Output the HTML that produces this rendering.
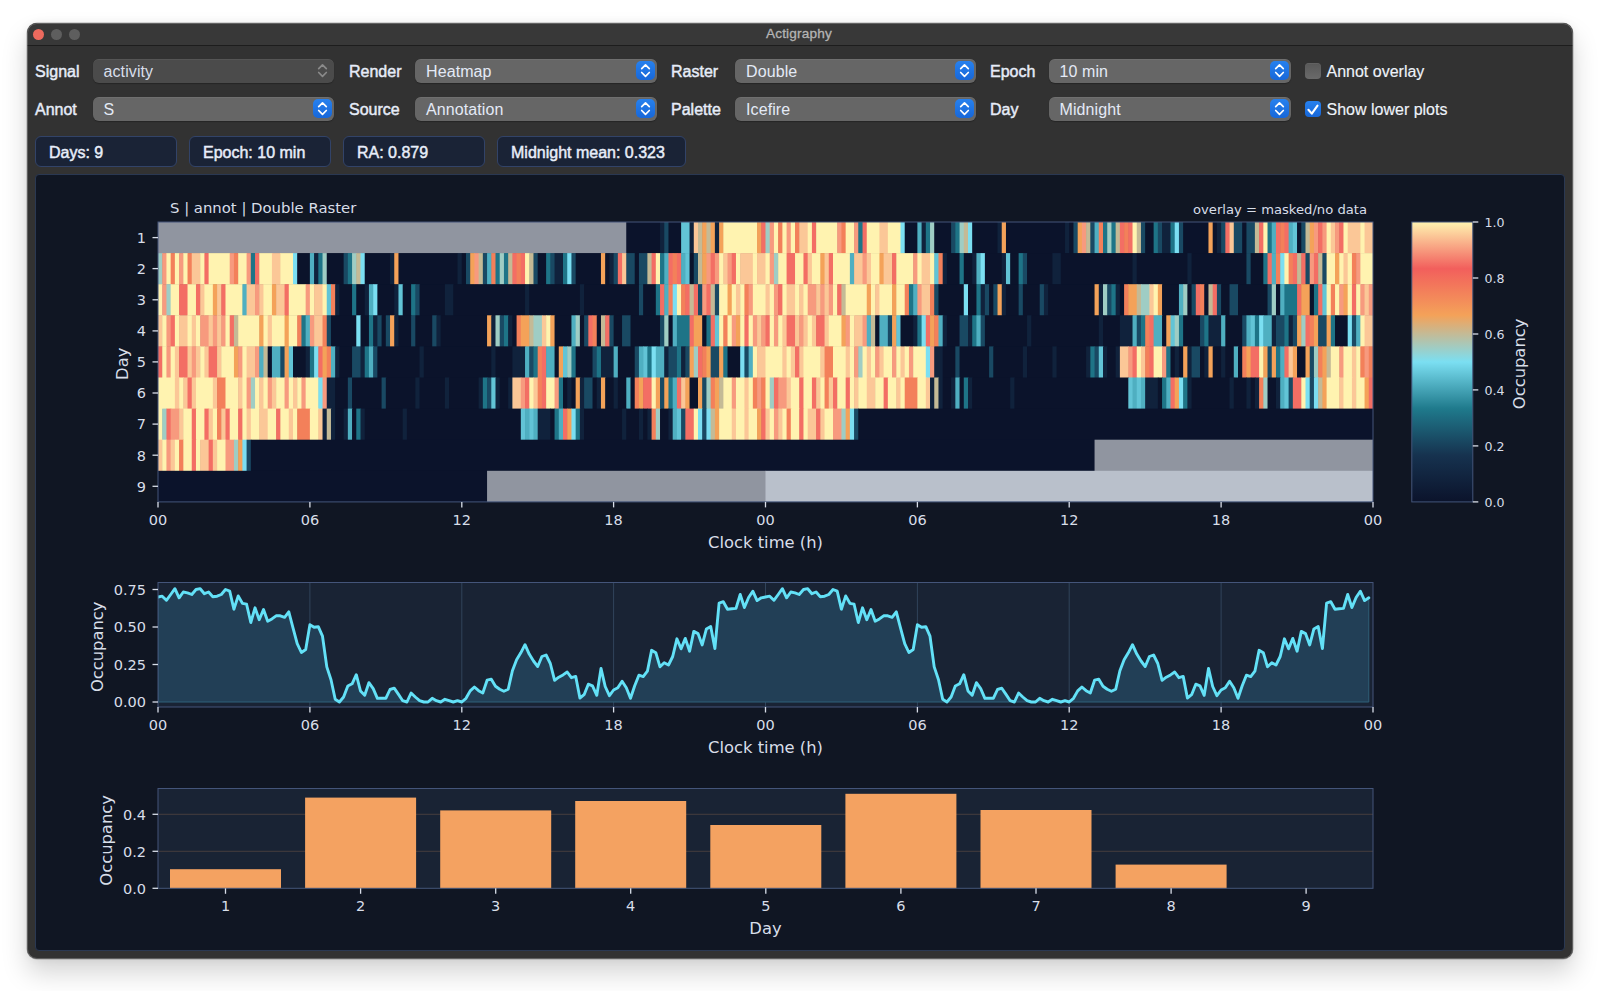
<!DOCTYPE html>
<html><head><meta charset="utf-8"><title>Actigraphy</title>
<style>
html,body{margin:0;padding:0}
body{width:1600px;height:991px;background:#fff;position:relative;overflow:hidden;font-family:"Liberation Sans",sans-serif}
.win{position:absolute;left:27px;top:22.5px;width:1546px;height:936.5px;background:#323232;border-radius:10px;box-shadow:0 0 0 .5px rgba(0,0,0,.28),0 14px 26px rgba(0,0,0,.17),0 0 10px rgba(0,0,0,.06);overflow:hidden}
.win:after{content:"";position:absolute;inset:0;border-radius:10px;border:1px solid rgba(255,255,255,.22);pointer-events:none}
.tb{position:absolute;left:0;top:0;right:0;height:22px;background:#383838;border-bottom:1px solid #1d1d1d}
.tt{position:absolute;left:-2px;right:0;top:3.5px;text-align:center;font-size:13.6px;color:#b4b4b4;letter-spacing:.2px;-webkit-text-stroke:.3px #b4b4b4}
.dot{position:absolute;top:6px;width:11px;height:11px;border-radius:50%;background:#5e5e5e}
.abs{position:absolute;left:0;top:0}
.lb{position:absolute;font-size:16px;-webkit-text-stroke:.45px #e6ecf8;color:#e6ecf8;line-height:25.5px;height:24px;white-space:nowrap}
.cb{position:absolute;height:24px;border-radius:6px;background:#666666;box-shadow:0 .5px 0 rgba(255,255,255,.12) inset,0 1px 1px rgba(0,0,0,.25);color:#e4eaf6;font-size:16px;letter-spacing:.1px;line-height:24px;box-sizing:border-box}
.cb span{position:absolute;left:11px;top:.7px}
.cb .ar{position:absolute;right:2px;top:1.8px;width:19px;height:19px;border-radius:5px;background:linear-gradient(#2781ee,#1767d9)}
.cb.dis{background:#4b4b4b;color:#d8deea}
.cb.dis .ar{background:none}
.pill{position:absolute;top:136px;height:31px;box-sizing:border-box;border:1px solid #324368;border-radius:6px;background:#1a2336;color:#e8eefa;font-size:16px;-webkit-text-stroke:.45px #e8eefa;line-height:31px;padding-left:13px;white-space:nowrap}
.chk{position:absolute;width:16px;height:16px;border-radius:4px;box-sizing:border-box}
.panel{position:absolute;left:35px;top:174px;width:1530px;height:777px;background:#101623;border:1px solid #2a3852;border-radius:4px;box-sizing:border-box}
</style></head><body>
<div class="win"><div class="tb"><div class="dot" style="left:6px;background:#ed6a5e"></div><div class="dot" style="left:23.5px"></div><div class="dot" style="left:41.5px"></div><div class="tt">Actigraphy</div></div></div>
<div class="lb" style="left:35px;top:59px">Signal</div><div class="cb dis" style="left:92.5px;top:59px;width:241.5px"><span>activity</span><svg class="ar" width="19" height="19" viewBox="0 0 19 19"><path d="M5.7 7.7 9.5 3.9 13.3 7.7M5.7 11.5 9.5 15.3 13.3 11.5" fill="none" stroke="#8a8a8a" stroke-width="1.7" stroke-linecap="round" stroke-linejoin="round"/></svg></div><div class="lb" style="left:349px;top:59px">Render</div><div class="cb" style="left:415px;top:59px;width:241.5px"><span>Heatmap</span><svg class="ar" width="19" height="19" viewBox="0 0 19 19"><path d="M5.7 7.7 9.5 3.9 13.3 7.7M5.7 11.5 9.5 15.3 13.3 11.5" fill="none" stroke="#fff" stroke-width="1.7" stroke-linecap="round" stroke-linejoin="round"/></svg></div><div class="lb" style="left:671px;top:59px">Raster</div><div class="cb" style="left:735px;top:59px;width:240.5px"><span>Double</span><svg class="ar" width="19" height="19" viewBox="0 0 19 19"><path d="M5.7 7.7 9.5 3.9 13.3 7.7M5.7 11.5 9.5 15.3 13.3 11.5" fill="none" stroke="#fff" stroke-width="1.7" stroke-linecap="round" stroke-linejoin="round"/></svg></div><div class="lb" style="left:990px;top:59px">Epoch</div><div class="cb" style="left:1048.5px;top:59px;width:242px"><span>10 min</span><svg class="ar" width="19" height="19" viewBox="0 0 19 19"><path d="M5.7 7.7 9.5 3.9 13.3 7.7M5.7 11.5 9.5 15.3 13.3 11.5" fill="none" stroke="#fff" stroke-width="1.7" stroke-linecap="round" stroke-linejoin="round"/></svg></div><div class="lb" style="left:35px;top:97px">Annot</div><div class="cb" style="left:92.5px;top:97px;width:241.5px"><span>S</span><svg class="ar" width="19" height="19" viewBox="0 0 19 19"><path d="M5.7 7.7 9.5 3.9 13.3 7.7M5.7 11.5 9.5 15.3 13.3 11.5" fill="none" stroke="#fff" stroke-width="1.7" stroke-linecap="round" stroke-linejoin="round"/></svg></div><div class="lb" style="left:349px;top:97px">Source</div><div class="cb" style="left:415px;top:97px;width:241.5px"><span>Annotation</span><svg class="ar" width="19" height="19" viewBox="0 0 19 19"><path d="M5.7 7.7 9.5 3.9 13.3 7.7M5.7 11.5 9.5 15.3 13.3 11.5" fill="none" stroke="#fff" stroke-width="1.7" stroke-linecap="round" stroke-linejoin="round"/></svg></div><div class="lb" style="left:671px;top:97px">Palette</div><div class="cb" style="left:735px;top:97px;width:240.5px"><span>Icefire</span><svg class="ar" width="19" height="19" viewBox="0 0 19 19"><path d="M5.7 7.7 9.5 3.9 13.3 7.7M5.7 11.5 9.5 15.3 13.3 11.5" fill="none" stroke="#fff" stroke-width="1.7" stroke-linecap="round" stroke-linejoin="round"/></svg></div><div class="lb" style="left:990px;top:97px">Day</div><div class="cb" style="left:1048.5px;top:97px;width:242px"><span>Midnight</span><svg class="ar" width="19" height="19" viewBox="0 0 19 19"><path d="M5.7 7.7 9.5 3.9 13.3 7.7M5.7 11.5 9.5 15.3 13.3 11.5" fill="none" stroke="#fff" stroke-width="1.7" stroke-linecap="round" stroke-linejoin="round"/></svg></div><div class="chk" style="left:1305px;top:63px;background:linear-gradient(#585858,#6a6a6a);box-shadow:0 .5px 0 rgba(255,255,255,.12) inset"></div><div class="lb" style="left:1326.5px;top:59px;-webkit-text-stroke:.15px #eef2fa;color:#eef2fa;font-size:16px;line-height:26.5px">Annot overlay</div><div class="chk" style="left:1305px;top:101px;background:linear-gradient(#2781ee,#1767d9)"><svg width="16" height="16" viewBox="0 0 16 16" style="position:absolute;left:0;top:0"><path d="M3.4 8.8 6.8 12.6 12.5 4.6" fill="none" stroke="#fff" stroke-width="2.1" stroke-linecap="round" stroke-linejoin="round"/></svg></div><div class="lb" style="left:1326.5px;top:97px;-webkit-text-stroke:.15px #eef2fa;color:#eef2fa;font-size:16px;line-height:26.5px">Show lower plots</div><div class="pill" style="left:35px;width:142px">Days: 9</div><div class="pill" style="left:189px;width:142px">Epoch: 10 min</div><div class="pill" style="left:343px;width:142px">RA: 0.879</div><div class="pill" style="left:497px;width:189px">Midnight mean: 0.323</div><div class="panel"></div>
<svg width="1600" height="991" viewBox="0 0 1600 991" style="position:absolute;left:0;top:0" font-family="'DejaVu Sans','Liberation Sans',sans-serif" fill="#d8dee9">
<rect x="158.00" y="222.00" width="1215.00" height="279.90" fill="#0b132b"/>
<g>
<g transform="translate(0,222.00)"><rect height="31.60" x="158.00" width="468.88" fill="#9095a0"/><rect height="31.60" x="626.28" width="34.35" fill="#0b132b"/><rect height="31.60" x="660.03" width="4.82" fill="#10223c"/><rect height="31.60" x="664.25" width="4.82" fill="#194963"/><rect height="31.60" x="668.47" width="13.26" fill="#0b132b"/><rect height="31.60" x="681.12" width="9.04" fill="#62c4d6"/><rect height="31.60" x="689.56" width="4.82" fill="#10223c"/><rect height="31.60" x="693.78" width="4.82" fill="#fbc797"/><rect height="31.60" x="698.00" width="4.82" fill="#c4ba96"/><rect height="31.60" x="702.22" width="4.82" fill="#f4a259"/><rect height="31.60" x="706.44" width="4.82" fill="#c4ba96"/><rect height="31.60" x="710.66" width="4.82" fill="#f4a259"/><rect height="31.60" x="714.88" width="4.82" fill="#10223c"/><rect height="31.60" x="719.09" width="4.82" fill="#f4a259"/><rect height="31.60" x="723.31" width="34.35" fill="#fff3b0"/><rect height="31.60" x="757.06" width="4.82" fill="#f4a259"/><rect height="31.60" x="761.28" width="4.82" fill="#f36e64"/><rect height="31.60" x="765.50" width="4.82" fill="#9fcdc4"/><rect height="31.60" x="769.72" width="4.82" fill="#f79a7e"/><rect height="31.60" x="773.94" width="4.82" fill="#fff3b0"/><rect height="31.60" x="778.16" width="4.82" fill="#f3805a"/><rect height="31.60" x="782.38" width="4.82" fill="#fff3b0"/><rect height="31.60" x="786.59" width="4.82" fill="#f79a7e"/><rect height="31.60" x="790.81" width="4.82" fill="#fff3b0"/><rect height="31.60" x="795.03" width="4.82" fill="#f3805a"/><rect height="31.60" x="799.25" width="9.04" fill="#fbc797"/><rect height="31.60" x="807.69" width="4.82" fill="#fff3b0"/><rect height="31.60" x="811.91" width="4.82" fill="#f36e64"/><rect height="31.60" x="816.12" width="21.69" fill="#fff3b0"/><rect height="31.60" x="837.22" width="4.82" fill="#f79a7e"/><rect height="31.60" x="841.44" width="4.82" fill="#f3805a"/><rect height="31.60" x="845.66" width="9.04" fill="#fff3b0"/><rect height="31.60" x="854.09" width="4.82" fill="#f79a7e"/><rect height="31.60" x="858.31" width="4.82" fill="#1e7487"/><rect height="31.60" x="862.53" width="4.82" fill="#f36e64"/><rect height="31.60" x="866.75" width="13.26" fill="#fff3b0"/><rect height="31.60" x="879.41" width="9.04" fill="#fbc797"/><rect height="31.60" x="887.84" width="13.26" fill="#fff3b0"/><rect height="31.60" x="900.50" width="4.82" fill="#7bdff2"/><rect height="31.60" x="904.72" width="13.26" fill="#0b132b"/><rect height="31.60" x="917.38" width="4.82" fill="#4fafc1"/><rect height="31.60" x="921.59" width="4.82" fill="#10223c"/><rect height="31.60" x="925.81" width="4.82" fill="#1e7487"/><rect height="31.60" x="930.03" width="4.82" fill="#9fcdc4"/><rect height="31.60" x="934.25" width="17.48" fill="#0b132b"/><rect height="31.60" x="951.12" width="4.82" fill="#194963"/><rect height="31.60" x="955.34" width="4.82" fill="#1e7487"/><rect height="31.60" x="959.56" width="4.82" fill="#9fcdc4"/><rect height="31.60" x="963.78" width="4.82" fill="#c4ba96"/><rect height="31.60" x="968.00" width="4.82" fill="#7bdff2"/><rect height="31.60" x="972.22" width="25.91" fill="#0b132b"/><rect height="31.60" x="997.53" width="4.82" fill="#10223c"/><rect height="31.60" x="1001.75" width="4.82" fill="#f4a259"/><rect height="31.60" x="1005.97" width="59.66" fill="#0b132b"/><rect height="31.60" x="1065.03" width="4.82" fill="#10223c"/><rect height="31.60" x="1069.25" width="4.82" fill="#0b132b"/><rect height="31.60" x="1073.47" width="4.82" fill="#194963"/><rect height="31.60" x="1077.69" width="4.82" fill="#f4a259"/><rect height="31.60" x="1081.91" width="4.82" fill="#f79a7e"/><rect height="31.60" x="1086.12" width="4.82" fill="#c4ba96"/><rect height="31.60" x="1090.34" width="4.82" fill="#194963"/><rect height="31.60" x="1094.56" width="4.82" fill="#4fafc1"/><rect height="31.60" x="1098.78" width="4.82" fill="#f3805a"/><rect height="31.60" x="1103.00" width="4.82" fill="#1e7487"/><rect height="31.60" x="1107.22" width="4.82" fill="#9fcdc4"/><rect height="31.60" x="1111.44" width="4.82" fill="#1e7487"/><rect height="31.60" x="1115.66" width="4.82" fill="#c4ba96"/><rect height="31.60" x="1119.88" width="4.82" fill="#f36e64"/><rect height="31.60" x="1124.09" width="4.82" fill="#f3805a"/><rect height="31.60" x="1128.31" width="4.82" fill="#f36e64"/><rect height="31.60" x="1132.53" width="4.82" fill="#fff3b0"/><rect height="31.60" x="1136.75" width="4.82" fill="#c4ba96"/><rect height="31.60" x="1140.97" width="4.82" fill="#194963"/><rect height="31.60" x="1145.19" width="9.04" fill="#0b132b"/><rect height="31.60" x="1153.62" width="4.82" fill="#1e7487"/><rect height="31.60" x="1157.84" width="4.82" fill="#194963"/><rect height="31.60" x="1162.06" width="9.04" fill="#10223c"/><rect height="31.60" x="1170.50" width="4.82" fill="#1e7487"/><rect height="31.60" x="1174.72" width="4.82" fill="#7bdff2"/><rect height="31.60" x="1178.94" width="4.82" fill="#194963"/><rect height="31.60" x="1183.16" width="25.91" fill="#0b132b"/><rect height="31.60" x="1208.47" width="4.82" fill="#f4a259"/><rect height="31.60" x="1212.69" width="4.82" fill="#0b132b"/><rect height="31.60" x="1216.91" width="4.82" fill="#10223c"/><rect height="31.60" x="1221.12" width="4.82" fill="#194963"/><rect height="31.60" x="1225.34" width="4.82" fill="#f36e64"/><rect height="31.60" x="1229.56" width="4.82" fill="#fbc797"/><rect height="31.60" x="1233.78" width="9.04" fill="#194963"/><rect height="31.60" x="1242.22" width="4.82" fill="#0b132b"/><rect height="31.60" x="1246.44" width="9.04" fill="#194963"/><rect height="31.60" x="1254.88" width="4.82" fill="#c4ba96"/><rect height="31.60" x="1259.09" width="4.82" fill="#f36e64"/><rect height="31.60" x="1263.31" width="4.82" fill="#fff3b0"/><rect height="31.60" x="1267.53" width="4.82" fill="#1e7487"/><rect height="31.60" x="1271.75" width="4.82" fill="#4fafc1"/><rect height="31.60" x="1275.97" width="4.82" fill="#f36e64"/><rect height="31.60" x="1280.19" width="4.82" fill="#f3805a"/><rect height="31.60" x="1284.41" width="4.82" fill="#f36e64"/><rect height="31.60" x="1288.62" width="4.82" fill="#4fafc1"/><rect height="31.60" x="1292.84" width="4.82" fill="#62c4d6"/><rect height="31.60" x="1297.06" width="4.82" fill="#0b132b"/><rect height="31.60" x="1301.28" width="4.82" fill="#194963"/><rect height="31.60" x="1305.50" width="4.82" fill="#c4ba96"/><rect height="31.60" x="1309.72" width="4.82" fill="#f4a259"/><rect height="31.60" x="1313.94" width="4.82" fill="#f79a7e"/><rect height="31.60" x="1318.16" width="4.82" fill="#f36e64"/><rect height="31.60" x="1322.38" width="4.82" fill="#f79a7e"/><rect height="31.60" x="1326.59" width="4.82" fill="#fff3b0"/><rect height="31.60" x="1330.81" width="4.82" fill="#fbc797"/><rect height="31.60" x="1335.03" width="4.82" fill="#f79a7e"/><rect height="31.60" x="1339.25" width="4.82" fill="#f36e64"/><rect height="31.60" x="1343.47" width="4.82" fill="#fff3b0"/><rect height="31.60" x="1347.69" width="13.26" fill="#fbc797"/><rect height="31.60" x="1360.34" width="4.82" fill="#fff3b0"/><rect height="31.60" x="1364.56" width="8.44" fill="#fbc797"/></g>
<g transform="translate(0,253.10)"><rect height="31.60" x="158.00" width="4.82" fill="#9fcdc4"/><rect height="31.60" x="162.22" width="4.82" fill="#f79a7e"/><rect height="31.60" x="166.44" width="4.82" fill="#fff3b0"/><rect height="31.60" x="170.66" width="4.82" fill="#f3805a"/><rect height="31.60" x="174.88" width="4.82" fill="#fff3b0"/><rect height="31.60" x="179.09" width="4.82" fill="#f79a7e"/><rect height="31.60" x="183.31" width="4.82" fill="#fff3b0"/><rect height="31.60" x="187.53" width="4.82" fill="#f3805a"/><rect height="31.60" x="191.75" width="9.04" fill="#fbc797"/><rect height="31.60" x="200.19" width="4.82" fill="#fff3b0"/><rect height="31.60" x="204.41" width="4.82" fill="#f36e64"/><rect height="31.60" x="208.62" width="21.69" fill="#fff3b0"/><rect height="31.60" x="229.72" width="4.82" fill="#f79a7e"/><rect height="31.60" x="233.94" width="4.82" fill="#f3805a"/><rect height="31.60" x="238.16" width="9.04" fill="#fff3b0"/><rect height="31.60" x="246.59" width="4.82" fill="#f79a7e"/><rect height="31.60" x="250.81" width="4.82" fill="#1e7487"/><rect height="31.60" x="255.03" width="4.82" fill="#f36e64"/><rect height="31.60" x="259.25" width="13.26" fill="#fff3b0"/><rect height="31.60" x="271.91" width="9.04" fill="#fbc797"/><rect height="31.60" x="280.34" width="13.26" fill="#fff3b0"/><rect height="31.60" x="293.00" width="4.82" fill="#7bdff2"/><rect height="31.60" x="297.22" width="13.26" fill="#0b132b"/><rect height="31.60" x="309.88" width="4.82" fill="#4fafc1"/><rect height="31.60" x="314.09" width="4.82" fill="#10223c"/><rect height="31.60" x="318.31" width="4.82" fill="#1e7487"/><rect height="31.60" x="322.53" width="4.82" fill="#9fcdc4"/><rect height="31.60" x="326.75" width="17.48" fill="#0b132b"/><rect height="31.60" x="343.62" width="4.82" fill="#194963"/><rect height="31.60" x="347.84" width="4.82" fill="#1e7487"/><rect height="31.60" x="352.06" width="4.82" fill="#9fcdc4"/><rect height="31.60" x="356.28" width="4.82" fill="#c4ba96"/><rect height="31.60" x="360.50" width="4.82" fill="#7bdff2"/><rect height="31.60" x="364.72" width="25.91" fill="#0b132b"/><rect height="31.60" x="390.03" width="4.82" fill="#10223c"/><rect height="31.60" x="394.25" width="4.82" fill="#f4a259"/><rect height="31.60" x="398.47" width="59.66" fill="#0b132b"/><rect height="31.60" x="457.53" width="4.82" fill="#10223c"/><rect height="31.60" x="461.75" width="4.82" fill="#0b132b"/><rect height="31.60" x="465.97" width="4.82" fill="#194963"/><rect height="31.60" x="470.19" width="4.82" fill="#f4a259"/><rect height="31.60" x="474.41" width="4.82" fill="#f79a7e"/><rect height="31.60" x="478.62" width="4.82" fill="#c4ba96"/><rect height="31.60" x="482.84" width="4.82" fill="#194963"/><rect height="31.60" x="487.06" width="4.82" fill="#4fafc1"/><rect height="31.60" x="491.28" width="4.82" fill="#f3805a"/><rect height="31.60" x="495.50" width="4.82" fill="#1e7487"/><rect height="31.60" x="499.72" width="4.82" fill="#9fcdc4"/><rect height="31.60" x="503.94" width="4.82" fill="#1e7487"/><rect height="31.60" x="508.16" width="4.82" fill="#c4ba96"/><rect height="31.60" x="512.38" width="4.82" fill="#f36e64"/><rect height="31.60" x="516.59" width="4.82" fill="#f3805a"/><rect height="31.60" x="520.81" width="4.82" fill="#f36e64"/><rect height="31.60" x="525.03" width="4.82" fill="#fff3b0"/><rect height="31.60" x="529.25" width="4.82" fill="#c4ba96"/><rect height="31.60" x="533.47" width="4.82" fill="#194963"/><rect height="31.60" x="537.69" width="9.04" fill="#0b132b"/><rect height="31.60" x="546.12" width="4.82" fill="#1e7487"/><rect height="31.60" x="550.34" width="4.82" fill="#194963"/><rect height="31.60" x="554.56" width="9.04" fill="#10223c"/><rect height="31.60" x="563.00" width="4.82" fill="#1e7487"/><rect height="31.60" x="567.22" width="4.82" fill="#7bdff2"/><rect height="31.60" x="571.44" width="4.82" fill="#194963"/><rect height="31.60" x="575.66" width="25.91" fill="#0b132b"/><rect height="31.60" x="600.97" width="4.82" fill="#f4a259"/><rect height="31.60" x="605.19" width="4.82" fill="#0b132b"/><rect height="31.60" x="609.41" width="4.82" fill="#10223c"/><rect height="31.60" x="613.62" width="4.82" fill="#194963"/><rect height="31.60" x="617.84" width="4.82" fill="#f36e64"/><rect height="31.60" x="622.06" width="4.82" fill="#fbc797"/><rect height="31.60" x="626.28" width="9.04" fill="#194963"/><rect height="31.60" x="634.72" width="4.82" fill="#0b132b"/><rect height="31.60" x="638.94" width="9.04" fill="#194963"/><rect height="31.60" x="647.38" width="4.82" fill="#c4ba96"/><rect height="31.60" x="651.59" width="4.82" fill="#f36e64"/><rect height="31.60" x="655.81" width="4.82" fill="#fff3b0"/><rect height="31.60" x="660.03" width="4.82" fill="#1e7487"/><rect height="31.60" x="664.25" width="4.82" fill="#4fafc1"/><rect height="31.60" x="668.47" width="4.82" fill="#f36e64"/><rect height="31.60" x="672.69" width="4.82" fill="#f3805a"/><rect height="31.60" x="676.91" width="4.82" fill="#f36e64"/><rect height="31.60" x="681.12" width="4.82" fill="#4fafc1"/><rect height="31.60" x="685.34" width="4.82" fill="#62c4d6"/><rect height="31.60" x="689.56" width="4.82" fill="#0b132b"/><rect height="31.60" x="693.78" width="4.82" fill="#194963"/><rect height="31.60" x="698.00" width="4.82" fill="#c4ba96"/><rect height="31.60" x="702.22" width="4.82" fill="#f4a259"/><rect height="31.60" x="706.44" width="4.82" fill="#f79a7e"/><rect height="31.60" x="710.66" width="4.82" fill="#f36e64"/><rect height="31.60" x="714.88" width="4.82" fill="#f79a7e"/><rect height="31.60" x="719.09" width="4.82" fill="#fff3b0"/><rect height="31.60" x="723.31" width="4.82" fill="#fbc797"/><rect height="31.60" x="727.53" width="4.82" fill="#f79a7e"/><rect height="31.60" x="731.75" width="4.82" fill="#f36e64"/><rect height="31.60" x="735.97" width="4.82" fill="#fff3b0"/><rect height="31.60" x="740.19" width="13.26" fill="#fbc797"/><rect height="31.60" x="752.84" width="4.82" fill="#fff3b0"/><rect height="31.60" x="757.06" width="9.04" fill="#fbc797"/><rect height="31.60" x="765.50" width="4.82" fill="#fff3b0"/><rect height="31.60" x="769.72" width="4.82" fill="#f79a7e"/><rect height="31.60" x="773.94" width="4.82" fill="#9fcdc4"/><rect height="31.60" x="778.16" width="9.04" fill="#fff3b0"/><rect height="31.60" x="786.59" width="9.04" fill="#f36e64"/><rect height="31.60" x="795.03" width="9.04" fill="#fff3b0"/><rect height="31.60" x="803.47" width="4.82" fill="#f36e64"/><rect height="31.60" x="807.69" width="4.82" fill="#fbc797"/><rect height="31.60" x="811.91" width="9.04" fill="#fff3b0"/><rect height="31.60" x="820.34" width="4.82" fill="#f4a259"/><rect height="31.60" x="824.56" width="4.82" fill="#fbc797"/><rect height="31.60" x="828.78" width="4.82" fill="#f36e64"/><rect height="31.60" x="833.00" width="17.48" fill="#fff3b0"/><rect height="31.60" x="849.88" width="4.82" fill="#4fafc1"/><rect height="31.60" x="854.09" width="9.04" fill="#fbc797"/><rect height="31.60" x="862.53" width="4.82" fill="#f79a7e"/><rect height="31.60" x="866.75" width="4.82" fill="#fbc797"/><rect height="31.60" x="870.97" width="9.04" fill="#fff3b0"/><rect height="31.60" x="879.41" width="4.82" fill="#f4a259"/><rect height="31.60" x="883.62" width="9.04" fill="#fbc797"/><rect height="31.60" x="892.06" width="4.82" fill="#f36e64"/><rect height="31.60" x="896.28" width="17.48" fill="#fff3b0"/><rect height="31.60" x="913.16" width="4.82" fill="#f79a7e"/><rect height="31.60" x="917.38" width="4.82" fill="#fff3b0"/><rect height="31.60" x="921.59" width="9.04" fill="#fbc797"/><rect height="31.60" x="930.03" width="4.82" fill="#fff3b0"/><rect height="31.60" x="934.25" width="4.82" fill="#62c4d6"/><rect height="31.60" x="938.47" width="4.82" fill="#f3805a"/><rect height="31.60" x="942.69" width="4.82" fill="#10223c"/><rect height="31.60" x="946.91" width="13.26" fill="#0b132b"/><rect height="31.60" x="959.56" width="4.82" fill="#1e7487"/><rect height="31.60" x="963.78" width="9.04" fill="#0b132b"/><rect height="31.60" x="972.22" width="4.82" fill="#10223c"/><rect height="31.60" x="976.44" width="4.82" fill="#4fafc1"/><rect height="31.60" x="980.66" width="4.82" fill="#7bdff2"/><rect height="31.60" x="984.88" width="17.48" fill="#0b132b"/><rect height="31.60" x="1001.75" width="4.82" fill="#10223c"/><rect height="31.60" x="1005.97" width="4.82" fill="#62c4d6"/><rect height="31.60" x="1010.19" width="9.04" fill="#0b132b"/><rect height="31.60" x="1018.62" width="4.82" fill="#1e7487"/><rect height="31.60" x="1022.84" width="4.82" fill="#194963"/><rect height="31.60" x="1027.06" width="25.91" fill="#0b132b"/><rect height="31.60" x="1052.38" width="9.04" fill="#10223c"/><rect height="31.60" x="1060.81" width="72.32" fill="#0b132b"/><rect height="31.60" x="1132.53" width="4.82" fill="#10223c"/><rect height="31.60" x="1136.75" width="51.22" fill="#0b132b"/><rect height="31.60" x="1187.38" width="4.82" fill="#10223c"/><rect height="31.60" x="1191.59" width="55.44" fill="#0b132b"/><rect height="31.60" x="1246.44" width="4.82" fill="#194963"/><rect height="31.60" x="1250.66" width="13.26" fill="#0b132b"/><rect height="31.60" x="1263.31" width="4.82" fill="#1e7487"/><rect height="31.60" x="1267.53" width="4.82" fill="#f36e64"/><rect height="31.60" x="1271.75" width="4.82" fill="#4fafc1"/><rect height="31.60" x="1275.97" width="4.82" fill="#f3805a"/><rect height="31.60" x="1280.19" width="4.82" fill="#7bdff2"/><rect height="31.60" x="1284.41" width="4.82" fill="#fff3b0"/><rect height="31.60" x="1288.62" width="4.82" fill="#f3805a"/><rect height="31.60" x="1292.84" width="4.82" fill="#f36e64"/><rect height="31.60" x="1297.06" width="4.82" fill="#c4ba96"/><rect height="31.60" x="1301.28" width="4.82" fill="#f36e64"/><rect height="31.60" x="1305.50" width="4.82" fill="#194963"/><rect height="31.60" x="1309.72" width="4.82" fill="#f79a7e"/><rect height="31.60" x="1313.94" width="4.82" fill="#f36e64"/><rect height="31.60" x="1318.16" width="4.82" fill="#c4ba96"/><rect height="31.60" x="1322.38" width="4.82" fill="#194963"/><rect height="31.60" x="1326.59" width="9.04" fill="#fff3b0"/><rect height="31.60" x="1335.03" width="4.82" fill="#f4a259"/><rect height="31.60" x="1339.25" width="4.82" fill="#fff3b0"/><rect height="31.60" x="1343.47" width="4.82" fill="#fbc797"/><rect height="31.60" x="1347.69" width="4.82" fill="#fff3b0"/><rect height="31.60" x="1351.91" width="4.82" fill="#f3805a"/><rect height="31.60" x="1356.12" width="4.82" fill="#f79a7e"/><rect height="31.60" x="1360.34" width="12.66" fill="#fff3b0"/></g>
<g transform="translate(0,284.20)"><rect height="31.60" x="158.00" width="4.82" fill="#fff3b0"/><rect height="31.60" x="162.22" width="4.82" fill="#f79a7e"/><rect height="31.60" x="166.44" width="4.82" fill="#9fcdc4"/><rect height="31.60" x="170.66" width="9.04" fill="#fff3b0"/><rect height="31.60" x="179.09" width="9.04" fill="#f36e64"/><rect height="31.60" x="187.53" width="9.04" fill="#fff3b0"/><rect height="31.60" x="195.97" width="4.82" fill="#f36e64"/><rect height="31.60" x="200.19" width="4.82" fill="#fbc797"/><rect height="31.60" x="204.41" width="9.04" fill="#fff3b0"/><rect height="31.60" x="212.84" width="4.82" fill="#f4a259"/><rect height="31.60" x="217.06" width="4.82" fill="#fbc797"/><rect height="31.60" x="221.28" width="4.82" fill="#f36e64"/><rect height="31.60" x="225.50" width="17.47" fill="#fff3b0"/><rect height="31.60" x="242.38" width="4.82" fill="#4fafc1"/><rect height="31.60" x="246.59" width="9.04" fill="#fbc797"/><rect height="31.60" x="255.03" width="4.82" fill="#f79a7e"/><rect height="31.60" x="259.25" width="4.82" fill="#fbc797"/><rect height="31.60" x="263.47" width="9.04" fill="#fff3b0"/><rect height="31.60" x="271.91" width="4.82" fill="#f4a259"/><rect height="31.60" x="276.12" width="9.04" fill="#fbc797"/><rect height="31.60" x="284.56" width="4.82" fill="#f36e64"/><rect height="31.60" x="288.78" width="17.48" fill="#fff3b0"/><rect height="31.60" x="305.66" width="4.82" fill="#f79a7e"/><rect height="31.60" x="309.88" width="4.82" fill="#fff3b0"/><rect height="31.60" x="314.09" width="9.04" fill="#fbc797"/><rect height="31.60" x="322.53" width="4.82" fill="#fff3b0"/><rect height="31.60" x="326.75" width="4.82" fill="#62c4d6"/><rect height="31.60" x="330.97" width="4.82" fill="#f3805a"/><rect height="31.60" x="335.19" width="4.82" fill="#10223c"/><rect height="31.60" x="339.41" width="13.26" fill="#0b132b"/><rect height="31.60" x="352.06" width="4.82" fill="#1e7487"/><rect height="31.60" x="356.28" width="9.04" fill="#0b132b"/><rect height="31.60" x="364.72" width="4.82" fill="#10223c"/><rect height="31.60" x="368.94" width="4.82" fill="#4fafc1"/><rect height="31.60" x="373.16" width="4.82" fill="#7bdff2"/><rect height="31.60" x="377.38" width="17.48" fill="#0b132b"/><rect height="31.60" x="394.25" width="4.82" fill="#10223c"/><rect height="31.60" x="398.47" width="4.82" fill="#62c4d6"/><rect height="31.60" x="402.69" width="9.04" fill="#0b132b"/><rect height="31.60" x="411.12" width="4.82" fill="#1e7487"/><rect height="31.60" x="415.34" width="4.82" fill="#194963"/><rect height="31.60" x="419.56" width="25.91" fill="#0b132b"/><rect height="31.60" x="444.88" width="9.04" fill="#10223c"/><rect height="31.60" x="453.31" width="72.32" fill="#0b132b"/><rect height="31.60" x="525.03" width="4.82" fill="#10223c"/><rect height="31.60" x="529.25" width="51.23" fill="#0b132b"/><rect height="31.60" x="579.88" width="4.82" fill="#10223c"/><rect height="31.60" x="584.09" width="55.44" fill="#0b132b"/><rect height="31.60" x="638.94" width="4.82" fill="#194963"/><rect height="31.60" x="643.16" width="13.26" fill="#0b132b"/><rect height="31.60" x="655.81" width="4.82" fill="#1e7487"/><rect height="31.60" x="660.03" width="4.82" fill="#f36e64"/><rect height="31.60" x="664.25" width="4.82" fill="#4fafc1"/><rect height="31.60" x="668.47" width="4.82" fill="#f3805a"/><rect height="31.60" x="672.69" width="4.82" fill="#7bdff2"/><rect height="31.60" x="676.91" width="4.82" fill="#fff3b0"/><rect height="31.60" x="681.12" width="4.82" fill="#f3805a"/><rect height="31.60" x="685.34" width="4.82" fill="#f36e64"/><rect height="31.60" x="689.56" width="4.82" fill="#c4ba96"/><rect height="31.60" x="693.78" width="4.82" fill="#f36e64"/><rect height="31.60" x="698.00" width="4.82" fill="#194963"/><rect height="31.60" x="702.22" width="4.82" fill="#f79a7e"/><rect height="31.60" x="706.44" width="4.82" fill="#f36e64"/><rect height="31.60" x="710.66" width="4.82" fill="#c4ba96"/><rect height="31.60" x="714.88" width="4.82" fill="#194963"/><rect height="31.60" x="719.09" width="9.04" fill="#fff3b0"/><rect height="31.60" x="727.53" width="4.82" fill="#f4a259"/><rect height="31.60" x="731.75" width="4.82" fill="#fff3b0"/><rect height="31.60" x="735.97" width="4.82" fill="#fbc797"/><rect height="31.60" x="740.19" width="4.82" fill="#fff3b0"/><rect height="31.60" x="744.41" width="4.82" fill="#f3805a"/><rect height="31.60" x="748.62" width="4.82" fill="#f79a7e"/><rect height="31.60" x="752.84" width="13.26" fill="#fff3b0"/><rect height="31.60" x="765.50" width="4.82" fill="#fbc797"/><rect height="31.60" x="769.72" width="4.82" fill="#fff3b0"/><rect height="31.60" x="773.94" width="4.82" fill="#f79a7e"/><rect height="31.60" x="778.16" width="4.82" fill="#f36e64"/><rect height="31.60" x="782.38" width="4.82" fill="#fff3b0"/><rect height="31.60" x="786.59" width="9.04" fill="#fbc797"/><rect height="31.60" x="795.03" width="4.82" fill="#fff3b0"/><rect height="31.60" x="799.25" width="4.82" fill="#fbc797"/><rect height="31.60" x="803.47" width="4.82" fill="#fff3b0"/><rect height="31.60" x="807.69" width="9.04" fill="#f79a7e"/><rect height="31.60" x="816.12" width="4.82" fill="#fbc797"/><rect height="31.60" x="820.34" width="4.82" fill="#f79a7e"/><rect height="31.60" x="824.56" width="4.82" fill="#fbc797"/><rect height="31.60" x="828.78" width="4.82" fill="#f79a7e"/><rect height="31.60" x="833.00" width="4.82" fill="#fff3b0"/><rect height="31.60" x="837.22" width="4.82" fill="#f36e64"/><rect height="31.60" x="841.44" width="4.82" fill="#c4ba96"/><rect height="31.60" x="845.66" width="21.69" fill="#fff3b0"/><rect height="31.60" x="866.75" width="4.82" fill="#f4a259"/><rect height="31.60" x="870.97" width="4.82" fill="#fff3b0"/><rect height="31.60" x="875.19" width="4.82" fill="#fbc797"/><rect height="31.60" x="879.41" width="13.26" fill="#fff3b0"/><rect height="31.60" x="892.06" width="4.82" fill="#f4a259"/><rect height="31.60" x="896.28" width="9.04" fill="#fff3b0"/><rect height="31.60" x="904.72" width="4.82" fill="#f3805a"/><rect height="31.60" x="908.94" width="4.82" fill="#1e7487"/><rect height="31.60" x="913.16" width="4.82" fill="#4fafc1"/><rect height="31.60" x="917.38" width="4.82" fill="#f79a7e"/><rect height="31.60" x="921.59" width="9.04" fill="#fbc797"/><rect height="31.60" x="930.03" width="4.82" fill="#f3805a"/><rect height="31.60" x="934.25" width="4.82" fill="#194963"/><rect height="31.60" x="938.47" width="25.91" fill="#0b132b"/><rect height="31.60" x="963.78" width="4.82" fill="#7bdff2"/><rect height="31.60" x="968.00" width="9.04" fill="#0b132b"/><rect height="31.60" x="976.44" width="4.82" fill="#1e7487"/><rect height="31.60" x="980.66" width="4.82" fill="#10223c"/><rect height="31.60" x="984.88" width="4.82" fill="#194963"/><rect height="31.60" x="989.09" width="4.82" fill="#0b132b"/><rect height="31.60" x="993.31" width="4.82" fill="#194963"/><rect height="31.60" x="997.53" width="4.82" fill="#f4a259"/><rect height="31.60" x="1001.75" width="4.82" fill="#10223c"/><rect height="31.60" x="1005.97" width="13.26" fill="#0b132b"/><rect height="31.60" x="1018.62" width="4.82" fill="#194963"/><rect height="31.60" x="1022.84" width="17.47" fill="#0b132b"/><rect height="31.60" x="1039.72" width="4.82" fill="#194963"/><rect height="31.60" x="1043.94" width="4.82" fill="#10223c"/><rect height="31.60" x="1048.16" width="47.01" fill="#0b132b"/><rect height="31.60" x="1094.56" width="4.82" fill="#f4a259"/><rect height="31.60" x="1098.78" width="4.82" fill="#10223c"/><rect height="31.60" x="1103.00" width="4.82" fill="#9fcdc4"/><rect height="31.60" x="1107.22" width="4.82" fill="#194963"/><rect height="31.60" x="1111.44" width="4.82" fill="#1e7487"/><rect height="31.60" x="1115.66" width="4.82" fill="#10223c"/><rect height="31.60" x="1119.88" width="4.82" fill="#0b132b"/><rect height="31.60" x="1124.09" width="4.82" fill="#f3805a"/><rect height="31.60" x="1128.31" width="9.04" fill="#f4a259"/><rect height="31.60" x="1136.75" width="4.82" fill="#c4ba96"/><rect height="31.60" x="1140.97" width="9.04" fill="#9fcdc4"/><rect height="31.60" x="1149.41" width="4.82" fill="#fbc797"/><rect height="31.60" x="1153.62" width="4.82" fill="#fff3b0"/><rect height="31.60" x="1157.84" width="4.82" fill="#f4a259"/><rect height="31.60" x="1162.06" width="17.47" fill="#0b132b"/><rect height="31.60" x="1178.94" width="4.82" fill="#4fafc1"/><rect height="31.60" x="1183.16" width="4.82" fill="#9fcdc4"/><rect height="31.60" x="1187.38" width="4.82" fill="#0b132b"/><rect height="31.60" x="1191.59" width="4.82" fill="#194963"/><rect height="31.60" x="1195.81" width="4.82" fill="#f36e64"/><rect height="31.60" x="1200.03" width="4.82" fill="#f3805a"/><rect height="31.60" x="1204.25" width="4.82" fill="#0b132b"/><rect height="31.60" x="1208.47" width="4.82" fill="#c4ba96"/><rect height="31.60" x="1212.69" width="4.82" fill="#f36e64"/><rect height="31.60" x="1216.91" width="4.82" fill="#194963"/><rect height="31.60" x="1221.12" width="9.04" fill="#0b132b"/><rect height="31.60" x="1229.56" width="9.04" fill="#194963"/><rect height="31.60" x="1238.00" width="30.13" fill="#0b132b"/><rect height="31.60" x="1267.53" width="4.82" fill="#194963"/><rect height="31.60" x="1271.75" width="4.82" fill="#9fcdc4"/><rect height="31.60" x="1275.97" width="4.82" fill="#0b132b"/><rect height="31.60" x="1280.19" width="4.82" fill="#4fafc1"/><rect height="31.60" x="1284.41" width="13.26" fill="#1e7487"/><rect height="31.60" x="1297.06" width="4.82" fill="#f36e64"/><rect height="31.60" x="1301.28" width="9.04" fill="#f4a259"/><rect height="31.60" x="1309.72" width="4.82" fill="#0b132b"/><rect height="31.60" x="1313.94" width="4.82" fill="#1e7487"/><rect height="31.60" x="1318.16" width="4.82" fill="#f36e64"/><rect height="31.60" x="1322.38" width="4.82" fill="#62c4d6"/><rect height="31.60" x="1326.59" width="4.82" fill="#fff3b0"/><rect height="31.60" x="1330.81" width="4.82" fill="#f3805a"/><rect height="31.60" x="1335.03" width="4.82" fill="#fff3b0"/><rect height="31.60" x="1339.25" width="4.82" fill="#f79a7e"/><rect height="31.60" x="1343.47" width="4.82" fill="#f4a259"/><rect height="31.60" x="1347.69" width="4.82" fill="#fff3b0"/><rect height="31.60" x="1351.91" width="4.82" fill="#f36e64"/><rect height="31.60" x="1356.12" width="4.82" fill="#fff3b0"/><rect height="31.60" x="1360.34" width="4.82" fill="#f79a7e"/><rect height="31.60" x="1364.56" width="4.82" fill="#fbc797"/><rect height="31.60" x="1368.78" width="4.22" fill="#f79a7e"/></g>
<g transform="translate(0,315.30)"><rect height="31.60" x="158.00" width="4.82" fill="#fbc797"/><rect height="31.60" x="162.22" width="4.82" fill="#fff3b0"/><rect height="31.60" x="166.44" width="4.82" fill="#f79a7e"/><rect height="31.60" x="170.66" width="4.82" fill="#f36e64"/><rect height="31.60" x="174.88" width="4.82" fill="#fff3b0"/><rect height="31.60" x="179.09" width="9.04" fill="#fbc797"/><rect height="31.60" x="187.53" width="4.82" fill="#fff3b0"/><rect height="31.60" x="191.75" width="4.82" fill="#fbc797"/><rect height="31.60" x="195.97" width="4.82" fill="#fff3b0"/><rect height="31.60" x="200.19" width="9.04" fill="#f79a7e"/><rect height="31.60" x="208.62" width="4.82" fill="#fbc797"/><rect height="31.60" x="212.84" width="4.82" fill="#f79a7e"/><rect height="31.60" x="217.06" width="4.82" fill="#fbc797"/><rect height="31.60" x="221.28" width="4.82" fill="#f79a7e"/><rect height="31.60" x="225.50" width="4.82" fill="#fff3b0"/><rect height="31.60" x="229.72" width="4.82" fill="#f36e64"/><rect height="31.60" x="233.94" width="4.82" fill="#c4ba96"/><rect height="31.60" x="238.16" width="21.69" fill="#fff3b0"/><rect height="31.60" x="259.25" width="4.82" fill="#f4a259"/><rect height="31.60" x="263.47" width="4.82" fill="#fff3b0"/><rect height="31.60" x="267.69" width="4.82" fill="#fbc797"/><rect height="31.60" x="271.91" width="13.26" fill="#fff3b0"/><rect height="31.60" x="284.56" width="4.82" fill="#f4a259"/><rect height="31.60" x="288.78" width="9.04" fill="#fff3b0"/><rect height="31.60" x="297.22" width="4.82" fill="#f3805a"/><rect height="31.60" x="301.44" width="4.82" fill="#1e7487"/><rect height="31.60" x="305.66" width="4.82" fill="#4fafc1"/><rect height="31.60" x="309.88" width="4.82" fill="#f79a7e"/><rect height="31.60" x="314.09" width="9.04" fill="#fbc797"/><rect height="31.60" x="322.53" width="4.82" fill="#f3805a"/><rect height="31.60" x="326.75" width="4.82" fill="#194963"/><rect height="31.60" x="330.97" width="25.91" fill="#0b132b"/><rect height="31.60" x="356.28" width="4.82" fill="#7bdff2"/><rect height="31.60" x="360.50" width="9.04" fill="#0b132b"/><rect height="31.60" x="368.94" width="4.82" fill="#1e7487"/><rect height="31.60" x="373.16" width="4.82" fill="#10223c"/><rect height="31.60" x="377.38" width="4.82" fill="#194963"/><rect height="31.60" x="381.59" width="4.82" fill="#0b132b"/><rect height="31.60" x="385.81" width="4.82" fill="#194963"/><rect height="31.60" x="390.03" width="4.82" fill="#f4a259"/><rect height="31.60" x="394.25" width="4.82" fill="#10223c"/><rect height="31.60" x="398.47" width="13.26" fill="#0b132b"/><rect height="31.60" x="411.12" width="4.82" fill="#194963"/><rect height="31.60" x="415.34" width="17.48" fill="#0b132b"/><rect height="31.60" x="432.22" width="4.82" fill="#194963"/><rect height="31.60" x="436.44" width="4.82" fill="#10223c"/><rect height="31.60" x="440.66" width="47.01" fill="#0b132b"/><rect height="31.60" x="487.06" width="4.82" fill="#f4a259"/><rect height="31.60" x="491.28" width="4.82" fill="#10223c"/><rect height="31.60" x="495.50" width="4.82" fill="#9fcdc4"/><rect height="31.60" x="499.72" width="4.82" fill="#194963"/><rect height="31.60" x="503.94" width="4.82" fill="#1e7487"/><rect height="31.60" x="508.16" width="4.82" fill="#10223c"/><rect height="31.60" x="512.38" width="4.82" fill="#0b132b"/><rect height="31.60" x="516.59" width="4.82" fill="#f3805a"/><rect height="31.60" x="520.81" width="9.04" fill="#f4a259"/><rect height="31.60" x="529.25" width="4.82" fill="#c4ba96"/><rect height="31.60" x="533.47" width="9.04" fill="#9fcdc4"/><rect height="31.60" x="541.91" width="4.82" fill="#fbc797"/><rect height="31.60" x="546.12" width="4.82" fill="#fff3b0"/><rect height="31.60" x="550.34" width="4.82" fill="#f4a259"/><rect height="31.60" x="554.56" width="17.48" fill="#0b132b"/><rect height="31.60" x="571.44" width="4.82" fill="#4fafc1"/><rect height="31.60" x="575.66" width="4.82" fill="#9fcdc4"/><rect height="31.60" x="579.88" width="4.82" fill="#0b132b"/><rect height="31.60" x="584.09" width="4.82" fill="#194963"/><rect height="31.60" x="588.31" width="4.82" fill="#f36e64"/><rect height="31.60" x="592.53" width="4.82" fill="#f3805a"/><rect height="31.60" x="596.75" width="4.82" fill="#0b132b"/><rect height="31.60" x="600.97" width="4.82" fill="#c4ba96"/><rect height="31.60" x="605.19" width="4.82" fill="#f36e64"/><rect height="31.60" x="609.41" width="4.82" fill="#194963"/><rect height="31.60" x="613.62" width="9.04" fill="#0b132b"/><rect height="31.60" x="622.06" width="9.04" fill="#194963"/><rect height="31.60" x="630.50" width="30.13" fill="#0b132b"/><rect height="31.60" x="660.03" width="4.82" fill="#194963"/><rect height="31.60" x="664.25" width="4.82" fill="#9fcdc4"/><rect height="31.60" x="668.47" width="4.82" fill="#0b132b"/><rect height="31.60" x="672.69" width="4.82" fill="#4fafc1"/><rect height="31.60" x="676.91" width="13.26" fill="#1e7487"/><rect height="31.60" x="689.56" width="4.82" fill="#f36e64"/><rect height="31.60" x="693.78" width="9.04" fill="#f4a259"/><rect height="31.60" x="702.22" width="4.82" fill="#0b132b"/><rect height="31.60" x="706.44" width="4.82" fill="#1e7487"/><rect height="31.60" x="710.66" width="4.82" fill="#f36e64"/><rect height="31.60" x="714.88" width="4.82" fill="#62c4d6"/><rect height="31.60" x="719.09" width="4.82" fill="#fff3b0"/><rect height="31.60" x="723.31" width="4.82" fill="#f3805a"/><rect height="31.60" x="727.53" width="4.82" fill="#fff3b0"/><rect height="31.60" x="731.75" width="4.82" fill="#f79a7e"/><rect height="31.60" x="735.97" width="4.82" fill="#f4a259"/><rect height="31.60" x="740.19" width="4.82" fill="#fff3b0"/><rect height="31.60" x="744.41" width="4.82" fill="#f36e64"/><rect height="31.60" x="748.62" width="4.82" fill="#fff3b0"/><rect height="31.60" x="752.84" width="4.82" fill="#f79a7e"/><rect height="31.60" x="757.06" width="4.82" fill="#fbc797"/><rect height="31.60" x="761.28" width="4.82" fill="#f79a7e"/><rect height="31.60" x="765.50" width="4.82" fill="#f36e64"/><rect height="31.60" x="769.72" width="4.82" fill="#fff3b0"/><rect height="31.60" x="773.94" width="4.82" fill="#f79a7e"/><rect height="31.60" x="778.16" width="4.82" fill="#fff3b0"/><rect height="31.60" x="782.38" width="4.82" fill="#fbc797"/><rect height="31.60" x="786.59" width="9.04" fill="#f36e64"/><rect height="31.60" x="795.03" width="4.82" fill="#fbc797"/><rect height="31.60" x="799.25" width="4.82" fill="#f79a7e"/><rect height="31.60" x="803.47" width="4.82" fill="#fbc797"/><rect height="31.60" x="807.69" width="4.82" fill="#fff3b0"/><rect height="31.60" x="811.91" width="4.82" fill="#fbc797"/><rect height="31.60" x="816.12" width="9.04" fill="#f36e64"/><rect height="31.60" x="824.56" width="4.82" fill="#fbc797"/><rect height="31.60" x="828.78" width="13.26" fill="#fff3b0"/><rect height="31.60" x="841.44" width="4.82" fill="#f4a259"/><rect height="31.60" x="845.66" width="4.82" fill="#f79a7e"/><rect height="31.60" x="849.88" width="4.82" fill="#fff3b0"/><rect height="31.60" x="854.09" width="9.04" fill="#fbc797"/><rect height="31.60" x="862.53" width="4.82" fill="#f79a7e"/><rect height="31.60" x="866.75" width="4.82" fill="#4fafc1"/><rect height="31.60" x="870.97" width="4.82" fill="#c4ba96"/><rect height="31.60" x="875.19" width="4.82" fill="#0b132b"/><rect height="31.60" x="879.41" width="9.04" fill="#4fafc1"/><rect height="31.60" x="887.84" width="4.82" fill="#194963"/><rect height="31.60" x="892.06" width="4.82" fill="#f4a259"/><rect height="31.60" x="896.28" width="4.82" fill="#62c4d6"/><rect height="31.60" x="900.50" width="13.26" fill="#0b132b"/><rect height="31.60" x="913.16" width="4.82" fill="#10223c"/><rect height="31.60" x="917.38" width="4.82" fill="#1e7487"/><rect height="31.60" x="921.59" width="4.82" fill="#7bdff2"/><rect height="31.60" x="925.81" width="4.82" fill="#f36e64"/><rect height="31.60" x="930.03" width="4.82" fill="#f4a259"/><rect height="31.60" x="934.25" width="4.82" fill="#f3805a"/><rect height="31.60" x="938.47" width="4.82" fill="#4fafc1"/><rect height="31.60" x="942.69" width="4.82" fill="#10223c"/><rect height="31.60" x="946.91" width="13.26" fill="#0b132b"/><rect height="31.60" x="959.56" width="9.04" fill="#194963"/><rect height="31.60" x="968.00" width="4.82" fill="#10223c"/><rect height="31.60" x="972.22" width="4.82" fill="#1e7487"/><rect height="31.60" x="976.44" width="4.82" fill="#4fafc1"/><rect height="31.60" x="980.66" width="4.82" fill="#194963"/><rect height="31.60" x="984.88" width="42.79" fill="#0b132b"/><rect height="31.60" x="1027.06" width="4.82" fill="#10223c"/><rect height="31.60" x="1031.28" width="68.10" fill="#0b132b"/><rect height="31.60" x="1098.78" width="4.82" fill="#10223c"/><rect height="31.60" x="1103.00" width="17.47" fill="#0b132b"/><rect height="31.60" x="1119.88" width="13.26" fill="#10223c"/><rect height="31.60" x="1132.53" width="4.82" fill="#4fafc1"/><rect height="31.60" x="1136.75" width="4.82" fill="#194963"/><rect height="31.60" x="1140.97" width="4.82" fill="#1e7487"/><rect height="31.60" x="1145.19" width="4.82" fill="#f3805a"/><rect height="31.60" x="1149.41" width="4.82" fill="#f36e64"/><rect height="31.60" x="1153.62" width="9.04" fill="#4fafc1"/><rect height="31.60" x="1162.06" width="4.82" fill="#0b132b"/><rect height="31.60" x="1166.28" width="4.82" fill="#f4a259"/><rect height="31.60" x="1170.50" width="4.82" fill="#62c4d6"/><rect height="31.60" x="1174.72" width="4.82" fill="#9fcdc4"/><rect height="31.60" x="1178.94" width="4.82" fill="#1e7487"/><rect height="31.60" x="1183.16" width="17.47" fill="#0b132b"/><rect height="31.60" x="1200.03" width="4.82" fill="#194963"/><rect height="31.60" x="1204.25" width="4.82" fill="#1e7487"/><rect height="31.60" x="1208.47" width="13.26" fill="#10223c"/><rect height="31.60" x="1221.12" width="4.82" fill="#4fafc1"/><rect height="31.60" x="1225.34" width="17.47" fill="#0b132b"/><rect height="31.60" x="1242.22" width="4.82" fill="#194963"/><rect height="31.60" x="1246.44" width="4.82" fill="#4fafc1"/><rect height="31.60" x="1250.66" width="4.82" fill="#62c4d6"/><rect height="31.60" x="1254.88" width="4.82" fill="#1e7487"/><rect height="31.60" x="1259.09" width="4.82" fill="#7bdff2"/><rect height="31.60" x="1263.31" width="9.04" fill="#4fafc1"/><rect height="31.60" x="1271.75" width="4.82" fill="#10223c"/><rect height="31.60" x="1275.97" width="9.04" fill="#194963"/><rect height="31.60" x="1284.41" width="4.82" fill="#1e7487"/><rect height="31.60" x="1288.62" width="4.82" fill="#10223c"/><rect height="31.60" x="1292.84" width="4.82" fill="#194963"/><rect height="31.60" x="1297.06" width="4.82" fill="#f4a259"/><rect height="31.60" x="1301.28" width="4.82" fill="#9fcdc4"/><rect height="31.60" x="1305.50" width="4.82" fill="#f36e64"/><rect height="31.60" x="1309.72" width="4.82" fill="#f3805a"/><rect height="31.60" x="1313.94" width="4.82" fill="#f4a259"/><rect height="31.60" x="1318.16" width="9.04" fill="#194963"/><rect height="31.60" x="1326.59" width="4.82" fill="#f4a259"/><rect height="31.60" x="1330.81" width="4.82" fill="#1e7487"/><rect height="31.60" x="1335.03" width="13.26" fill="#0b132b"/><rect height="31.60" x="1347.69" width="4.82" fill="#7bdff2"/><rect height="31.60" x="1351.91" width="4.82" fill="#194963"/><rect height="31.60" x="1356.12" width="4.82" fill="#4fafc1"/><rect height="31.60" x="1360.34" width="4.82" fill="#fff3b0"/><rect height="31.60" x="1364.56" width="8.44" fill="#fbc797"/></g>
<g transform="translate(0,346.40)"><rect height="31.60" x="158.00" width="4.82" fill="#f36e64"/><rect height="31.60" x="162.22" width="4.82" fill="#fff3b0"/><rect height="31.60" x="166.44" width="4.82" fill="#f79a7e"/><rect height="31.60" x="170.66" width="4.82" fill="#fff3b0"/><rect height="31.60" x="174.88" width="4.82" fill="#fbc797"/><rect height="31.60" x="179.09" width="9.04" fill="#f36e64"/><rect height="31.60" x="187.53" width="4.82" fill="#fbc797"/><rect height="31.60" x="191.75" width="4.82" fill="#f79a7e"/><rect height="31.60" x="195.97" width="4.82" fill="#fbc797"/><rect height="31.60" x="200.19" width="4.82" fill="#fff3b0"/><rect height="31.60" x="204.41" width="4.82" fill="#fbc797"/><rect height="31.60" x="208.62" width="9.04" fill="#f36e64"/><rect height="31.60" x="217.06" width="4.82" fill="#fbc797"/><rect height="31.60" x="221.28" width="13.26" fill="#fff3b0"/><rect height="31.60" x="233.94" width="4.82" fill="#f4a259"/><rect height="31.60" x="238.16" width="4.82" fill="#f79a7e"/><rect height="31.60" x="242.38" width="4.82" fill="#fff3b0"/><rect height="31.60" x="246.59" width="9.04" fill="#fbc797"/><rect height="31.60" x="255.03" width="4.82" fill="#f79a7e"/><rect height="31.60" x="259.25" width="4.82" fill="#4fafc1"/><rect height="31.60" x="263.47" width="4.82" fill="#c4ba96"/><rect height="31.60" x="267.69" width="4.82" fill="#0b132b"/><rect height="31.60" x="271.91" width="9.04" fill="#4fafc1"/><rect height="31.60" x="280.34" width="4.82" fill="#194963"/><rect height="31.60" x="284.56" width="4.82" fill="#f4a259"/><rect height="31.60" x="288.78" width="4.82" fill="#62c4d6"/><rect height="31.60" x="293.00" width="13.26" fill="#0b132b"/><rect height="31.60" x="305.66" width="4.82" fill="#10223c"/><rect height="31.60" x="309.88" width="4.82" fill="#1e7487"/><rect height="31.60" x="314.09" width="4.82" fill="#7bdff2"/><rect height="31.60" x="318.31" width="4.82" fill="#f36e64"/><rect height="31.60" x="322.53" width="4.82" fill="#f4a259"/><rect height="31.60" x="326.75" width="4.82" fill="#f3805a"/><rect height="31.60" x="330.97" width="4.82" fill="#4fafc1"/><rect height="31.60" x="335.19" width="4.82" fill="#10223c"/><rect height="31.60" x="339.41" width="13.26" fill="#0b132b"/><rect height="31.60" x="352.06" width="9.04" fill="#194963"/><rect height="31.60" x="360.50" width="4.82" fill="#10223c"/><rect height="31.60" x="364.72" width="4.82" fill="#1e7487"/><rect height="31.60" x="368.94" width="4.82" fill="#4fafc1"/><rect height="31.60" x="373.16" width="4.82" fill="#194963"/><rect height="31.60" x="377.38" width="42.79" fill="#0b132b"/><rect height="31.60" x="419.56" width="4.82" fill="#10223c"/><rect height="31.60" x="423.78" width="68.10" fill="#0b132b"/><rect height="31.60" x="491.28" width="4.82" fill="#10223c"/><rect height="31.60" x="495.50" width="17.48" fill="#0b132b"/><rect height="31.60" x="512.38" width="13.26" fill="#10223c"/><rect height="31.60" x="525.03" width="4.82" fill="#4fafc1"/><rect height="31.60" x="529.25" width="4.82" fill="#194963"/><rect height="31.60" x="533.47" width="4.82" fill="#1e7487"/><rect height="31.60" x="537.69" width="4.82" fill="#f3805a"/><rect height="31.60" x="541.91" width="4.82" fill="#f36e64"/><rect height="31.60" x="546.12" width="9.04" fill="#4fafc1"/><rect height="31.60" x="554.56" width="4.82" fill="#0b132b"/><rect height="31.60" x="558.78" width="4.82" fill="#f4a259"/><rect height="31.60" x="563.00" width="4.82" fill="#62c4d6"/><rect height="31.60" x="567.22" width="4.82" fill="#9fcdc4"/><rect height="31.60" x="571.44" width="4.82" fill="#1e7487"/><rect height="31.60" x="575.66" width="17.48" fill="#0b132b"/><rect height="31.60" x="592.53" width="4.82" fill="#194963"/><rect height="31.60" x="596.75" width="4.82" fill="#1e7487"/><rect height="31.60" x="600.97" width="13.26" fill="#10223c"/><rect height="31.60" x="613.62" width="4.82" fill="#4fafc1"/><rect height="31.60" x="617.84" width="17.48" fill="#0b132b"/><rect height="31.60" x="634.72" width="4.82" fill="#194963"/><rect height="31.60" x="638.94" width="4.82" fill="#4fafc1"/><rect height="31.60" x="643.16" width="4.82" fill="#62c4d6"/><rect height="31.60" x="647.38" width="4.82" fill="#1e7487"/><rect height="31.60" x="651.59" width="4.82" fill="#7bdff2"/><rect height="31.60" x="655.81" width="9.04" fill="#4fafc1"/><rect height="31.60" x="664.25" width="4.82" fill="#10223c"/><rect height="31.60" x="668.47" width="9.04" fill="#194963"/><rect height="31.60" x="676.91" width="4.82" fill="#1e7487"/><rect height="31.60" x="681.12" width="4.82" fill="#10223c"/><rect height="31.60" x="685.34" width="4.82" fill="#194963"/><rect height="31.60" x="689.56" width="4.82" fill="#f4a259"/><rect height="31.60" x="693.78" width="4.82" fill="#9fcdc4"/><rect height="31.60" x="698.00" width="4.82" fill="#f36e64"/><rect height="31.60" x="702.22" width="4.82" fill="#f3805a"/><rect height="31.60" x="706.44" width="4.82" fill="#f4a259"/><rect height="31.60" x="710.66" width="9.04" fill="#194963"/><rect height="31.60" x="719.09" width="4.82" fill="#f4a259"/><rect height="31.60" x="723.31" width="4.82" fill="#1e7487"/><rect height="31.60" x="727.53" width="13.26" fill="#0b132b"/><rect height="31.60" x="740.19" width="4.82" fill="#7bdff2"/><rect height="31.60" x="744.41" width="4.82" fill="#194963"/><rect height="31.60" x="748.62" width="4.82" fill="#4fafc1"/><rect height="31.60" x="752.84" width="4.82" fill="#fff3b0"/><rect height="31.60" x="757.06" width="9.04" fill="#fbc797"/><rect height="31.60" x="765.50" width="17.48" fill="#fff3b0"/><rect height="31.60" x="782.38" width="4.82" fill="#fbc797"/><rect height="31.60" x="786.59" width="4.82" fill="#fff3b0"/><rect height="31.60" x="790.81" width="4.82" fill="#fbc797"/><rect height="31.60" x="795.03" width="4.82" fill="#f36e64"/><rect height="31.60" x="799.25" width="4.82" fill="#fbc797"/><rect height="31.60" x="803.47" width="17.48" fill="#fff3b0"/><rect height="31.60" x="820.34" width="4.82" fill="#fbc797"/><rect height="31.60" x="824.56" width="9.04" fill="#f3805a"/><rect height="31.60" x="833.00" width="13.26" fill="#fff3b0"/><rect height="31.60" x="845.66" width="4.82" fill="#fbc797"/><rect height="31.60" x="849.88" width="4.82" fill="#fff3b0"/><rect height="31.60" x="854.09" width="4.82" fill="#f79a7e"/><rect height="31.60" x="858.31" width="4.82" fill="#9fcdc4"/><rect height="31.60" x="862.53" width="4.82" fill="#fff3b0"/><rect height="31.60" x="866.75" width="4.82" fill="#fbc797"/><rect height="31.60" x="870.97" width="4.82" fill="#fff3b0"/><rect height="31.60" x="875.19" width="4.82" fill="#f79a7e"/><rect height="31.60" x="879.41" width="4.82" fill="#fbc797"/><rect height="31.60" x="883.62" width="9.04" fill="#fff3b0"/><rect height="31.60" x="892.06" width="4.82" fill="#f79a7e"/><rect height="31.60" x="896.28" width="4.82" fill="#fff3b0"/><rect height="31.60" x="900.50" width="4.82" fill="#fbc797"/><rect height="31.60" x="904.72" width="4.82" fill="#fff3b0"/><rect height="31.60" x="908.94" width="4.82" fill="#f79a7e"/><rect height="31.60" x="913.16" width="13.26" fill="#fff3b0"/><rect height="31.60" x="925.81" width="4.82" fill="#7bdff2"/><rect height="31.60" x="930.03" width="4.82" fill="#f79a7e"/><rect height="31.60" x="934.25" width="9.04" fill="#10223c"/><rect height="31.60" x="942.69" width="13.26" fill="#0b132b"/><rect height="31.60" x="955.34" width="4.82" fill="#194963"/><rect height="31.60" x="959.56" width="30.13" fill="#0b132b"/><rect height="31.60" x="989.09" width="4.82" fill="#194963"/><rect height="31.60" x="993.31" width="30.13" fill="#0b132b"/><rect height="31.60" x="1022.84" width="4.82" fill="#10223c"/><rect height="31.60" x="1027.06" width="25.91" fill="#0b132b"/><rect height="31.60" x="1052.38" width="4.82" fill="#10223c"/><rect height="31.60" x="1056.59" width="30.13" fill="#0b132b"/><rect height="31.60" x="1086.12" width="4.82" fill="#10223c"/><rect height="31.60" x="1090.34" width="4.82" fill="#1e7487"/><rect height="31.60" x="1094.56" width="4.82" fill="#194963"/><rect height="31.60" x="1098.78" width="4.82" fill="#62c4d6"/><rect height="31.60" x="1103.00" width="4.82" fill="#10223c"/><rect height="31.60" x="1107.22" width="9.04" fill="#0b132b"/><rect height="31.60" x="1115.66" width="4.82" fill="#10223c"/><rect height="31.60" x="1119.88" width="9.04" fill="#fbc797"/><rect height="31.60" x="1128.31" width="4.82" fill="#f79a7e"/><rect height="31.60" x="1132.53" width="4.82" fill="#f36e64"/><rect height="31.60" x="1136.75" width="4.82" fill="#fff3b0"/><rect height="31.60" x="1140.97" width="4.82" fill="#fbc797"/><rect height="31.60" x="1145.19" width="4.82" fill="#f3805a"/><rect height="31.60" x="1149.41" width="4.82" fill="#f36e64"/><rect height="31.60" x="1153.62" width="9.04" fill="#fff3b0"/><rect height="31.60" x="1162.06" width="4.82" fill="#f79a7e"/><rect height="31.60" x="1166.28" width="4.82" fill="#1e7487"/><rect height="31.60" x="1170.50" width="4.82" fill="#0b132b"/><rect height="31.60" x="1174.72" width="4.82" fill="#10223c"/><rect height="31.60" x="1178.94" width="4.82" fill="#0b132b"/><rect height="31.60" x="1183.16" width="4.82" fill="#f4a259"/><rect height="31.60" x="1187.38" width="4.82" fill="#10223c"/><rect height="31.60" x="1191.59" width="9.04" fill="#194963"/><rect height="31.60" x="1200.03" width="4.82" fill="#0b132b"/><rect height="31.60" x="1204.25" width="4.82" fill="#10223c"/><rect height="31.60" x="1208.47" width="4.82" fill="#f4a259"/><rect height="31.60" x="1212.69" width="9.04" fill="#0b132b"/><rect height="31.60" x="1221.12" width="4.82" fill="#10223c"/><rect height="31.60" x="1225.34" width="9.04" fill="#0b132b"/><rect height="31.60" x="1233.78" width="4.82" fill="#4fafc1"/><rect height="31.60" x="1238.00" width="4.82" fill="#0b132b"/><rect height="31.60" x="1242.22" width="4.82" fill="#f3805a"/><rect height="31.60" x="1246.44" width="4.82" fill="#f4a259"/><rect height="31.60" x="1250.66" width="9.04" fill="#f36e64"/><rect height="31.60" x="1259.09" width="4.82" fill="#fff3b0"/><rect height="31.60" x="1263.31" width="4.82" fill="#f4a259"/><rect height="31.60" x="1267.53" width="4.82" fill="#194963"/><rect height="31.60" x="1271.75" width="4.82" fill="#f4a259"/><rect height="31.60" x="1275.97" width="4.82" fill="#1e7487"/><rect height="31.60" x="1280.19" width="4.82" fill="#4fafc1"/><rect height="31.60" x="1284.41" width="4.82" fill="#f36e64"/><rect height="31.60" x="1288.62" width="4.82" fill="#fbc797"/><rect height="31.60" x="1292.84" width="4.82" fill="#f4a259"/><rect height="31.60" x="1297.06" width="9.04" fill="#0b132b"/><rect height="31.60" x="1305.50" width="4.82" fill="#f4a259"/><rect height="31.60" x="1309.72" width="4.82" fill="#194963"/><rect height="31.60" x="1313.94" width="4.82" fill="#9fcdc4"/><rect height="31.60" x="1318.16" width="4.82" fill="#f3805a"/><rect height="31.60" x="1322.38" width="4.82" fill="#f4a259"/><rect height="31.60" x="1326.59" width="4.82" fill="#c4ba96"/><rect height="31.60" x="1330.81" width="9.04" fill="#fff3b0"/><rect height="31.60" x="1339.25" width="4.82" fill="#f79a7e"/><rect height="31.60" x="1343.47" width="9.04" fill="#fff3b0"/><rect height="31.60" x="1351.91" width="4.82" fill="#fbc797"/><rect height="31.60" x="1356.12" width="4.82" fill="#fff3b0"/><rect height="31.60" x="1360.34" width="4.82" fill="#f3805a"/><rect height="31.60" x="1364.56" width="4.82" fill="#f79a7e"/><rect height="31.60" x="1368.78" width="4.22" fill="#f3805a"/></g>
<g transform="translate(0,377.50)"><rect height="31.60" x="158.00" width="17.47" fill="#fff3b0"/><rect height="31.60" x="174.88" width="4.82" fill="#fbc797"/><rect height="31.60" x="179.09" width="4.82" fill="#fff3b0"/><rect height="31.60" x="183.31" width="4.82" fill="#fbc797"/><rect height="31.60" x="187.53" width="4.82" fill="#f36e64"/><rect height="31.60" x="191.75" width="4.82" fill="#fbc797"/><rect height="31.60" x="195.97" width="17.47" fill="#fff3b0"/><rect height="31.60" x="212.84" width="4.82" fill="#fbc797"/><rect height="31.60" x="217.06" width="9.04" fill="#f3805a"/><rect height="31.60" x="225.50" width="13.26" fill="#fff3b0"/><rect height="31.60" x="238.16" width="4.82" fill="#fbc797"/><rect height="31.60" x="242.38" width="4.82" fill="#fff3b0"/><rect height="31.60" x="246.59" width="4.82" fill="#f79a7e"/><rect height="31.60" x="250.81" width="4.82" fill="#9fcdc4"/><rect height="31.60" x="255.03" width="4.82" fill="#fff3b0"/><rect height="31.60" x="259.25" width="4.82" fill="#fbc797"/><rect height="31.60" x="263.47" width="4.82" fill="#fff3b0"/><rect height="31.60" x="267.69" width="4.82" fill="#f79a7e"/><rect height="31.60" x="271.91" width="4.82" fill="#fbc797"/><rect height="31.60" x="276.12" width="9.04" fill="#fff3b0"/><rect height="31.60" x="284.56" width="4.82" fill="#f79a7e"/><rect height="31.60" x="288.78" width="4.82" fill="#fff3b0"/><rect height="31.60" x="293.00" width="4.82" fill="#fbc797"/><rect height="31.60" x="297.22" width="4.82" fill="#fff3b0"/><rect height="31.60" x="301.44" width="4.82" fill="#f79a7e"/><rect height="31.60" x="305.66" width="13.26" fill="#fff3b0"/><rect height="31.60" x="318.31" width="4.82" fill="#7bdff2"/><rect height="31.60" x="322.53" width="4.82" fill="#f79a7e"/><rect height="31.60" x="326.75" width="9.04" fill="#10223c"/><rect height="31.60" x="335.19" width="13.26" fill="#0b132b"/><rect height="31.60" x="347.84" width="4.82" fill="#194963"/><rect height="31.60" x="352.06" width="30.13" fill="#0b132b"/><rect height="31.60" x="381.59" width="4.82" fill="#194963"/><rect height="31.60" x="385.81" width="30.13" fill="#0b132b"/><rect height="31.60" x="415.34" width="4.82" fill="#10223c"/><rect height="31.60" x="419.56" width="25.91" fill="#0b132b"/><rect height="31.60" x="444.88" width="4.82" fill="#10223c"/><rect height="31.60" x="449.09" width="30.13" fill="#0b132b"/><rect height="31.60" x="478.62" width="4.82" fill="#10223c"/><rect height="31.60" x="482.84" width="4.82" fill="#1e7487"/><rect height="31.60" x="487.06" width="4.82" fill="#194963"/><rect height="31.60" x="491.28" width="4.82" fill="#62c4d6"/><rect height="31.60" x="495.50" width="4.82" fill="#10223c"/><rect height="31.60" x="499.72" width="9.04" fill="#0b132b"/><rect height="31.60" x="508.16" width="4.82" fill="#10223c"/><rect height="31.60" x="512.38" width="9.04" fill="#fbc797"/><rect height="31.60" x="520.81" width="4.82" fill="#f79a7e"/><rect height="31.60" x="525.03" width="4.82" fill="#f36e64"/><rect height="31.60" x="529.25" width="4.82" fill="#fff3b0"/><rect height="31.60" x="533.47" width="4.82" fill="#fbc797"/><rect height="31.60" x="537.69" width="4.82" fill="#f3805a"/><rect height="31.60" x="541.91" width="4.82" fill="#f36e64"/><rect height="31.60" x="546.12" width="9.04" fill="#fff3b0"/><rect height="31.60" x="554.56" width="4.82" fill="#f79a7e"/><rect height="31.60" x="558.78" width="4.82" fill="#1e7487"/><rect height="31.60" x="563.00" width="4.82" fill="#0b132b"/><rect height="31.60" x="567.22" width="4.82" fill="#10223c"/><rect height="31.60" x="571.44" width="4.82" fill="#0b132b"/><rect height="31.60" x="575.66" width="4.82" fill="#f4a259"/><rect height="31.60" x="579.88" width="4.82" fill="#10223c"/><rect height="31.60" x="584.09" width="9.04" fill="#194963"/><rect height="31.60" x="592.53" width="4.82" fill="#0b132b"/><rect height="31.60" x="596.75" width="4.82" fill="#10223c"/><rect height="31.60" x="600.97" width="4.82" fill="#f4a259"/><rect height="31.60" x="605.19" width="9.04" fill="#0b132b"/><rect height="31.60" x="613.62" width="4.82" fill="#10223c"/><rect height="31.60" x="617.84" width="9.04" fill="#0b132b"/><rect height="31.60" x="626.28" width="4.82" fill="#4fafc1"/><rect height="31.60" x="630.50" width="4.82" fill="#0b132b"/><rect height="31.60" x="634.72" width="4.82" fill="#f3805a"/><rect height="31.60" x="638.94" width="4.82" fill="#f4a259"/><rect height="31.60" x="643.16" width="9.04" fill="#f36e64"/><rect height="31.60" x="651.59" width="4.82" fill="#fff3b0"/><rect height="31.60" x="655.81" width="4.82" fill="#f4a259"/><rect height="31.60" x="660.03" width="4.82" fill="#194963"/><rect height="31.60" x="664.25" width="4.82" fill="#f4a259"/><rect height="31.60" x="668.47" width="4.82" fill="#1e7487"/><rect height="31.60" x="672.69" width="4.82" fill="#4fafc1"/><rect height="31.60" x="676.91" width="4.82" fill="#f36e64"/><rect height="31.60" x="681.12" width="4.82" fill="#fbc797"/><rect height="31.60" x="685.34" width="4.82" fill="#f4a259"/><rect height="31.60" x="689.56" width="9.04" fill="#0b132b"/><rect height="31.60" x="698.00" width="4.82" fill="#f4a259"/><rect height="31.60" x="702.22" width="4.82" fill="#194963"/><rect height="31.60" x="706.44" width="4.82" fill="#9fcdc4"/><rect height="31.60" x="710.66" width="4.82" fill="#f3805a"/><rect height="31.60" x="714.88" width="4.82" fill="#f4a259"/><rect height="31.60" x="719.09" width="4.82" fill="#c4ba96"/><rect height="31.60" x="723.31" width="9.04" fill="#fff3b0"/><rect height="31.60" x="731.75" width="4.82" fill="#f79a7e"/><rect height="31.60" x="735.97" width="9.04" fill="#fff3b0"/><rect height="31.60" x="744.41" width="4.82" fill="#fbc797"/><rect height="31.60" x="748.62" width="4.82" fill="#fff3b0"/><rect height="31.60" x="752.84" width="4.82" fill="#f3805a"/><rect height="31.60" x="757.06" width="4.82" fill="#f79a7e"/><rect height="31.60" x="761.28" width="4.82" fill="#f3805a"/><rect height="31.60" x="765.50" width="4.82" fill="#fff3b0"/><rect height="31.60" x="769.72" width="4.82" fill="#9fcdc4"/><rect height="31.60" x="773.94" width="4.82" fill="#f36e64"/><rect height="31.60" x="778.16" width="9.04" fill="#f79a7e"/><rect height="31.60" x="786.59" width="4.82" fill="#fbc797"/><rect height="31.60" x="790.81" width="9.04" fill="#fff3b0"/><rect height="31.60" x="799.25" width="4.82" fill="#f36e64"/><rect height="31.60" x="803.47" width="9.04" fill="#fff3b0"/><rect height="31.60" x="811.91" width="4.82" fill="#f36e64"/><rect height="31.60" x="816.12" width="4.82" fill="#fbc797"/><rect height="31.60" x="820.34" width="4.82" fill="#fff3b0"/><rect height="31.60" x="824.56" width="4.82" fill="#f3805a"/><rect height="31.60" x="828.78" width="4.82" fill="#fbc797"/><rect height="31.60" x="833.00" width="4.82" fill="#f36e64"/><rect height="31.60" x="837.22" width="9.04" fill="#fff3b0"/><rect height="31.60" x="845.66" width="4.82" fill="#f36e64"/><rect height="31.60" x="849.88" width="4.82" fill="#fff3b0"/><rect height="31.60" x="854.09" width="4.82" fill="#fbc797"/><rect height="31.60" x="858.31" width="9.04" fill="#fff3b0"/><rect height="31.60" x="866.75" width="9.04" fill="#fbc797"/><rect height="31.60" x="875.19" width="9.04" fill="#fff3b0"/><rect height="31.60" x="883.62" width="4.82" fill="#f36e64"/><rect height="31.60" x="887.84" width="9.04" fill="#fff3b0"/><rect height="31.60" x="896.28" width="4.82" fill="#fbc797"/><rect height="31.60" x="900.50" width="4.82" fill="#fff3b0"/><rect height="31.60" x="904.72" width="13.26" fill="#f3805a"/><rect height="31.60" x="917.38" width="9.04" fill="#fff3b0"/><rect height="31.60" x="925.81" width="4.82" fill="#fbc797"/><rect height="31.60" x="930.03" width="4.82" fill="#10223c"/><rect height="31.60" x="934.25" width="4.82" fill="#c4ba96"/><rect height="31.60" x="938.47" width="4.82" fill="#10223c"/><rect height="31.60" x="942.69" width="9.04" fill="#0b132b"/><rect height="31.60" x="951.12" width="4.82" fill="#10223c"/><rect height="31.60" x="955.34" width="4.82" fill="#4fafc1"/><rect height="31.60" x="959.56" width="4.82" fill="#0b132b"/><rect height="31.60" x="963.78" width="4.82" fill="#1e7487"/><rect height="31.60" x="968.00" width="4.82" fill="#10223c"/><rect height="31.60" x="972.22" width="38.57" fill="#0b132b"/><rect height="31.60" x="1010.19" width="4.82" fill="#10223c"/><rect height="31.60" x="1014.41" width="114.51" fill="#0b132b"/><rect height="31.60" x="1128.31" width="4.82" fill="#62c4d6"/><rect height="31.60" x="1132.53" width="4.82" fill="#4fafc1"/><rect height="31.60" x="1136.75" width="4.82" fill="#62c4d6"/><rect height="31.60" x="1140.97" width="4.82" fill="#4fafc1"/><rect height="31.60" x="1145.19" width="13.26" fill="#10223c"/><rect height="31.60" x="1157.84" width="4.82" fill="#0b132b"/><rect height="31.60" x="1162.06" width="4.82" fill="#1e7487"/><rect height="31.60" x="1166.28" width="4.82" fill="#4fafc1"/><rect height="31.60" x="1170.50" width="4.82" fill="#f36e64"/><rect height="31.60" x="1174.72" width="4.82" fill="#f4a259"/><rect height="31.60" x="1178.94" width="4.82" fill="#7bdff2"/><rect height="31.60" x="1183.16" width="4.82" fill="#1e7487"/><rect height="31.60" x="1187.38" width="4.82" fill="#10223c"/><rect height="31.60" x="1191.59" width="38.57" fill="#0b132b"/><rect height="31.60" x="1229.56" width="4.82" fill="#10223c"/><rect height="31.60" x="1233.78" width="13.26" fill="#0b132b"/><rect height="31.60" x="1246.44" width="4.82" fill="#10223c"/><rect height="31.60" x="1250.66" width="4.82" fill="#0b132b"/><rect height="31.60" x="1254.88" width="4.82" fill="#10223c"/><rect height="31.60" x="1259.09" width="4.82" fill="#f3805a"/><rect height="31.60" x="1263.31" width="4.82" fill="#9fcdc4"/><rect height="31.60" x="1267.53" width="9.04" fill="#0b132b"/><rect height="31.60" x="1275.97" width="4.82" fill="#10223c"/><rect height="31.60" x="1280.19" width="4.82" fill="#4fafc1"/><rect height="31.60" x="1284.41" width="4.82" fill="#62c4d6"/><rect height="31.60" x="1288.62" width="4.82" fill="#194963"/><rect height="31.60" x="1292.84" width="9.04" fill="#f36e64"/><rect height="31.60" x="1301.28" width="4.82" fill="#fff3b0"/><rect height="31.60" x="1305.50" width="4.82" fill="#7bdff2"/><rect height="31.60" x="1309.72" width="4.82" fill="#194963"/><rect height="31.60" x="1313.94" width="4.82" fill="#7bdff2"/><rect height="31.60" x="1318.16" width="4.82" fill="#c4ba96"/><rect height="31.60" x="1322.38" width="4.82" fill="#f4a259"/><rect height="31.60" x="1326.59" width="13.26" fill="#fff3b0"/><rect height="31.60" x="1339.25" width="4.82" fill="#fbc797"/><rect height="31.60" x="1343.47" width="9.04" fill="#fff3b0"/><rect height="31.60" x="1351.91" width="4.82" fill="#fbc797"/><rect height="31.60" x="1356.12" width="9.04" fill="#fff3b0"/><rect height="31.60" x="1364.56" width="4.82" fill="#f4a259"/><rect height="31.60" x="1368.78" width="4.22" fill="#f36e64"/></g>
<g transform="translate(0,408.60)"><rect height="31.60" x="158.00" width="4.82" fill="#fff3b0"/><rect height="31.60" x="162.22" width="4.82" fill="#9fcdc4"/><rect height="31.60" x="166.44" width="4.82" fill="#f36e64"/><rect height="31.60" x="170.66" width="9.04" fill="#f79a7e"/><rect height="31.60" x="179.09" width="4.82" fill="#fbc797"/><rect height="31.60" x="183.31" width="9.04" fill="#fff3b0"/><rect height="31.60" x="191.75" width="4.82" fill="#f36e64"/><rect height="31.60" x="195.97" width="9.04" fill="#fff3b0"/><rect height="31.60" x="204.41" width="4.82" fill="#f36e64"/><rect height="31.60" x="208.62" width="4.82" fill="#fbc797"/><rect height="31.60" x="212.84" width="4.82" fill="#fff3b0"/><rect height="31.60" x="217.06" width="4.82" fill="#f3805a"/><rect height="31.60" x="221.28" width="4.82" fill="#fbc797"/><rect height="31.60" x="225.50" width="4.82" fill="#f36e64"/><rect height="31.60" x="229.72" width="9.04" fill="#fff3b0"/><rect height="31.60" x="238.16" width="4.82" fill="#f36e64"/><rect height="31.60" x="242.38" width="4.82" fill="#fff3b0"/><rect height="31.60" x="246.59" width="4.82" fill="#fbc797"/><rect height="31.60" x="250.81" width="9.04" fill="#fff3b0"/><rect height="31.60" x="259.25" width="9.04" fill="#fbc797"/><rect height="31.60" x="267.69" width="9.04" fill="#fff3b0"/><rect height="31.60" x="276.12" width="4.82" fill="#f36e64"/><rect height="31.60" x="280.34" width="9.04" fill="#fff3b0"/><rect height="31.60" x="288.78" width="4.82" fill="#fbc797"/><rect height="31.60" x="293.00" width="4.82" fill="#fff3b0"/><rect height="31.60" x="297.22" width="13.26" fill="#f3805a"/><rect height="31.60" x="309.88" width="9.04" fill="#fff3b0"/><rect height="31.60" x="318.31" width="4.82" fill="#fbc797"/><rect height="31.60" x="322.53" width="4.82" fill="#10223c"/><rect height="31.60" x="326.75" width="4.82" fill="#c4ba96"/><rect height="31.60" x="330.97" width="4.82" fill="#10223c"/><rect height="31.60" x="335.19" width="9.04" fill="#0b132b"/><rect height="31.60" x="343.62" width="4.82" fill="#10223c"/><rect height="31.60" x="347.84" width="4.82" fill="#4fafc1"/><rect height="31.60" x="352.06" width="4.82" fill="#0b132b"/><rect height="31.60" x="356.28" width="4.82" fill="#1e7487"/><rect height="31.60" x="360.50" width="4.82" fill="#10223c"/><rect height="31.60" x="364.72" width="38.57" fill="#0b132b"/><rect height="31.60" x="402.69" width="4.82" fill="#10223c"/><rect height="31.60" x="406.91" width="114.51" fill="#0b132b"/><rect height="31.60" x="520.81" width="4.82" fill="#62c4d6"/><rect height="31.60" x="525.03" width="4.82" fill="#4fafc1"/><rect height="31.60" x="529.25" width="4.82" fill="#62c4d6"/><rect height="31.60" x="533.47" width="4.82" fill="#4fafc1"/><rect height="31.60" x="537.69" width="13.26" fill="#10223c"/><rect height="31.60" x="550.34" width="4.82" fill="#0b132b"/><rect height="31.60" x="554.56" width="4.82" fill="#1e7487"/><rect height="31.60" x="558.78" width="4.82" fill="#4fafc1"/><rect height="31.60" x="563.00" width="4.82" fill="#f36e64"/><rect height="31.60" x="567.22" width="4.82" fill="#f4a259"/><rect height="31.60" x="571.44" width="4.82" fill="#7bdff2"/><rect height="31.60" x="575.66" width="4.82" fill="#1e7487"/><rect height="31.60" x="579.88" width="4.82" fill="#10223c"/><rect height="31.60" x="584.09" width="38.57" fill="#0b132b"/><rect height="31.60" x="622.06" width="4.82" fill="#10223c"/><rect height="31.60" x="626.28" width="13.26" fill="#0b132b"/><rect height="31.60" x="638.94" width="4.82" fill="#10223c"/><rect height="31.60" x="643.16" width="4.82" fill="#0b132b"/><rect height="31.60" x="647.38" width="4.82" fill="#10223c"/><rect height="31.60" x="651.59" width="4.82" fill="#f3805a"/><rect height="31.60" x="655.81" width="4.82" fill="#9fcdc4"/><rect height="31.60" x="660.03" width="9.04" fill="#0b132b"/><rect height="31.60" x="668.47" width="4.82" fill="#10223c"/><rect height="31.60" x="672.69" width="4.82" fill="#4fafc1"/><rect height="31.60" x="676.91" width="4.82" fill="#62c4d6"/><rect height="31.60" x="681.12" width="4.82" fill="#194963"/><rect height="31.60" x="685.34" width="9.04" fill="#f36e64"/><rect height="31.60" x="693.78" width="4.82" fill="#fff3b0"/><rect height="31.60" x="698.00" width="4.82" fill="#7bdff2"/><rect height="31.60" x="702.22" width="4.82" fill="#194963"/><rect height="31.60" x="706.44" width="4.82" fill="#7bdff2"/><rect height="31.60" x="710.66" width="4.82" fill="#c4ba96"/><rect height="31.60" x="714.88" width="4.82" fill="#f4a259"/><rect height="31.60" x="719.09" width="13.26" fill="#fff3b0"/><rect height="31.60" x="731.75" width="4.82" fill="#fbc797"/><rect height="31.60" x="735.97" width="9.04" fill="#fff3b0"/><rect height="31.60" x="744.41" width="4.82" fill="#fbc797"/><rect height="31.60" x="748.62" width="9.04" fill="#fff3b0"/><rect height="31.60" x="757.06" width="4.82" fill="#f4a259"/><rect height="31.60" x="761.28" width="4.82" fill="#f36e64"/><rect height="31.60" x="765.50" width="4.82" fill="#fbc797"/><rect height="31.60" x="769.72" width="4.82" fill="#fff3b0"/><rect height="31.60" x="773.94" width="4.82" fill="#f79a7e"/><rect height="31.60" x="778.16" width="4.82" fill="#fbc797"/><rect height="31.60" x="782.38" width="4.82" fill="#fff3b0"/><rect height="31.60" x="786.59" width="4.82" fill="#f3805a"/><rect height="31.60" x="790.81" width="9.04" fill="#fff3b0"/><rect height="31.60" x="799.25" width="4.82" fill="#f36e64"/><rect height="31.60" x="803.47" width="4.82" fill="#fff3b0"/><rect height="31.60" x="807.69" width="9.04" fill="#fbc797"/><rect height="31.60" x="816.12" width="4.82" fill="#f36e64"/><rect height="31.60" x="820.34" width="4.82" fill="#fbc797"/><rect height="31.60" x="824.56" width="9.04" fill="#fff3b0"/><rect height="31.60" x="833.00" width="9.04" fill="#f79a7e"/><rect height="31.60" x="841.44" width="4.82" fill="#9fcdc4"/><rect height="31.60" x="845.66" width="4.82" fill="#f4a259"/><rect height="31.60" x="849.88" width="4.82" fill="#7bdff2"/><rect height="31.60" x="854.09" width="4.82" fill="#194963"/><rect height="31.60" x="858.31" width="514.69" fill="#0b132b"/></g>
<g transform="translate(0,439.70)"><rect height="31.60" x="158.00" width="4.82" fill="#fbc797"/><rect height="31.60" x="162.22" width="4.82" fill="#fff3b0"/><rect height="31.60" x="166.44" width="4.82" fill="#f79a7e"/><rect height="31.60" x="170.66" width="4.82" fill="#fbc797"/><rect height="31.60" x="174.88" width="4.82" fill="#fff3b0"/><rect height="31.60" x="179.09" width="4.82" fill="#f3805a"/><rect height="31.60" x="183.31" width="9.04" fill="#fff3b0"/><rect height="31.60" x="191.75" width="4.82" fill="#f36e64"/><rect height="31.60" x="195.97" width="4.82" fill="#fff3b0"/><rect height="31.60" x="200.19" width="9.04" fill="#fbc797"/><rect height="31.60" x="208.62" width="4.82" fill="#f36e64"/><rect height="31.60" x="212.84" width="4.82" fill="#fbc797"/><rect height="31.60" x="217.06" width="9.04" fill="#fff3b0"/><rect height="31.60" x="225.50" width="9.04" fill="#f79a7e"/><rect height="31.60" x="233.94" width="4.82" fill="#9fcdc4"/><rect height="31.60" x="238.16" width="4.82" fill="#f4a259"/><rect height="31.60" x="242.38" width="4.82" fill="#7bdff2"/><rect height="31.60" x="246.59" width="4.82" fill="#194963"/><rect height="31.60" x="250.81" width="844.35" fill="#0b132b"/><rect height="31.60" x="1094.56" width="278.44" fill="#9095a0"/></g>
<g transform="translate(0,470.80)"><rect height="31.10" x="158.00" width="329.66" fill="#0b132b"/><rect height="31.10" x="487.06" width="279.04" fill="#9095a0"/><rect height="31.10" x="765.50" width="607.50" fill="#b9c0cb"/></g>
</g>
<rect x="158.00" y="222.00" width="1215.00" height="279.90" fill="none" stroke="#44557a" stroke-width="1"/>
<text x="170" y="212.5" font-size="14.85">S | annot | Double Raster</text>
<text x="1367" y="214" font-size="13.15" text-anchor="end">overlay = masked/no data</text>
<path d="M152.5 237.6h5.5" stroke="#d8dee9" stroke-width="1.3"/>
<text x="146.0" y="242.9" font-size="14.5" text-anchor="end">1</text>
<path d="M152.5 268.6h5.5" stroke="#d8dee9" stroke-width="1.3"/>
<text x="146.0" y="273.9" font-size="14.5" text-anchor="end">2</text>
<path d="M152.5 299.8h5.5" stroke="#d8dee9" stroke-width="1.3"/>
<text x="146.0" y="305.1" font-size="14.5" text-anchor="end">3</text>
<path d="M152.5 330.9h5.5" stroke="#d8dee9" stroke-width="1.3"/>
<text x="146.0" y="336.2" font-size="14.5" text-anchor="end">4</text>
<path d="M152.5 361.9h5.5" stroke="#d8dee9" stroke-width="1.3"/>
<text x="146.0" y="367.2" font-size="14.5" text-anchor="end">5</text>
<path d="M152.5 393.0h5.5" stroke="#d8dee9" stroke-width="1.3"/>
<text x="146.0" y="398.3" font-size="14.5" text-anchor="end">6</text>
<path d="M152.5 424.1h5.5" stroke="#d8dee9" stroke-width="1.3"/>
<text x="146.0" y="429.4" font-size="14.5" text-anchor="end">7</text>
<path d="M152.5 455.2h5.5" stroke="#d8dee9" stroke-width="1.3"/>
<text x="146.0" y="460.6" font-size="14.5" text-anchor="end">8</text>
<path d="M152.5 486.3h5.5" stroke="#d8dee9" stroke-width="1.3"/>
<text x="146.0" y="491.6" font-size="14.5" text-anchor="end">9</text>
<text transform="translate(127.5,363.8) rotate(-90)" font-size="16.35" text-anchor="middle">Day</text>
<path d="M158.0 501.9v5.5" stroke="#d8dee9" stroke-width="1.3"/>
<text x="158.0" y="524.6" font-size="14.5" text-anchor="middle">00</text>
<path d="M309.9 501.9v5.5" stroke="#d8dee9" stroke-width="1.3"/>
<text x="309.9" y="524.6" font-size="14.5" text-anchor="middle">06</text>
<path d="M461.8 501.9v5.5" stroke="#d8dee9" stroke-width="1.3"/>
<text x="461.8" y="524.6" font-size="14.5" text-anchor="middle">12</text>
<path d="M613.6 501.9v5.5" stroke="#d8dee9" stroke-width="1.3"/>
<text x="613.6" y="524.6" font-size="14.5" text-anchor="middle">18</text>
<path d="M765.5 501.9v5.5" stroke="#d8dee9" stroke-width="1.3"/>
<text x="765.5" y="524.6" font-size="14.5" text-anchor="middle">00</text>
<path d="M917.4 501.9v5.5" stroke="#d8dee9" stroke-width="1.3"/>
<text x="917.4" y="524.6" font-size="14.5" text-anchor="middle">06</text>
<path d="M1069.2 501.9v5.5" stroke="#d8dee9" stroke-width="1.3"/>
<text x="1069.2" y="524.6" font-size="14.5" text-anchor="middle">12</text>
<path d="M1221.1 501.9v5.5" stroke="#d8dee9" stroke-width="1.3"/>
<text x="1221.1" y="524.6" font-size="14.5" text-anchor="middle">18</text>
<path d="M1373.0 501.9v5.5" stroke="#d8dee9" stroke-width="1.3"/>
<text x="1373.0" y="524.6" font-size="14.5" text-anchor="middle">00</text>
<text x="765.5" y="547.8" font-size="16.35" text-anchor="middle">Clock time (h)</text>
<defs><linearGradient id="cb" x1="0" y1="1" x2="0" y2="0"><stop offset="0.0000" stop-color="#0b132b"/><stop offset="0.1667" stop-color="#16324f"/><stop offset="0.3333" stop-color="#1f7a8c"/><stop offset="0.5000" stop-color="#7bdff2"/><stop offset="0.6667" stop-color="#f4a259"/><stop offset="0.8333" stop-color="#f25f5c"/><stop offset="1.0000" stop-color="#fff3b0"/></linearGradient></defs>
<rect x="1411.8" y="222.0" width="61.0" height="279.9" fill="url(#cb)" stroke="#44557a" stroke-width="1"/>
<path d="M1472.8 501.9h5.5" stroke="#d8dee9" stroke-width="1.3"/>
<text x="1484.5" y="506.6" font-size="12.6">0.0</text>
<path d="M1472.8 445.9h5.5" stroke="#d8dee9" stroke-width="1.3"/>
<text x="1484.5" y="450.6" font-size="12.6">0.2</text>
<path d="M1472.8 389.9h5.5" stroke="#d8dee9" stroke-width="1.3"/>
<text x="1484.5" y="394.6" font-size="12.6">0.4</text>
<path d="M1472.8 334.0h5.5" stroke="#d8dee9" stroke-width="1.3"/>
<text x="1484.5" y="338.7" font-size="12.6">0.6</text>
<path d="M1472.8 278.0h5.5" stroke="#d8dee9" stroke-width="1.3"/>
<text x="1484.5" y="282.7" font-size="12.6">0.8</text>
<path d="M1472.8 222.0h5.5" stroke="#d8dee9" stroke-width="1.3"/>
<text x="1484.5" y="226.7" font-size="12.6">1.0</text>
<text transform="translate(1525,363.9) rotate(-90)" font-size="16.35" text-anchor="middle">Occupancy</text>
<rect x="158.0" y="582.5" width="1215.0" height="124.5" fill="#192334"/>
<path d="M309.9 582.5V707.0" stroke="#31445b" stroke-width="1"/>
<path d="M461.8 582.5V707.0" stroke="#31445b" stroke-width="1"/>
<path d="M613.6 582.5V707.0" stroke="#31445b" stroke-width="1"/>
<path d="M765.5 582.5V707.0" stroke="#31445b" stroke-width="1"/>
<path d="M917.4 582.5V707.0" stroke="#31445b" stroke-width="1"/>
<path d="M1069.2 582.5V707.0" stroke="#31445b" stroke-width="1"/>
<path d="M1221.1 582.5V707.0" stroke="#31445b" stroke-width="1"/>
<clipPath id="lc"><rect x="158.0" y="582.5" width="1215.0" height="124.5"/></clipPath>
<g clip-path="url(#lc)"><path d="M158.0 597.0 L162.2 596.2 L166.4 600.3 L170.7 594.5 L174.9 588.7 L179.1 597.8 L183.3 592.0 L187.5 592.8 L191.8 594.5 L196.0 589.5 L200.2 588.7 L204.4 593.7 L208.6 592.0 L212.8 596.7 L217.1 596.2 L221.3 594.5 L225.5 589.5 L229.7 591.2 L233.9 609.2 L238.2 595.9 L242.4 603.3 L246.6 604.2 L250.8 622.5 L255.0 607.8 L259.2 619.7 L263.5 609.5 L267.7 621.2 L271.9 618.9 L276.1 615.8 L280.3 615.8 L284.6 617.3 L288.8 611.9 L293.0 627.8 L297.2 643.7 L301.4 652.5 L305.7 649.5 L309.9 624.7 L314.1 627.3 L318.3 626.7 L322.5 636.2 L326.8 666.9 L331.0 679.8 L335.2 699.3 L339.4 702.0 L343.6 697.0 L347.8 686.0 L352.1 683.8 L356.3 674.7 L360.5 691.0 L364.7 695.3 L368.9 682.7 L373.2 688.7 L377.4 698.3 L381.6 698.3 L385.8 698.3 L390.0 689.5 L394.2 688.2 L398.5 694.4 L402.7 700.7 L406.9 702.0 L411.1 693.0 L415.3 697.0 L419.6 700.7 L423.8 702.0 L428.0 702.0 L432.2 698.3 L436.4 700.7 L440.7 702.0 L444.9 699.3 L449.1 700.7 L453.3 702.0 L457.5 700.7 L461.8 702.0 L466.0 698.3 L470.2 690.9 L474.4 687.0 L478.6 690.7 L482.8 693.0 L487.1 680.2 L491.3 679.2 L495.5 686.2 L499.7 689.2 L503.9 691.3 L508.2 689.3 L512.4 670.7 L516.6 659.8 L520.8 652.8 L525.0 644.7 L529.2 654.1 L533.5 661.0 L537.7 666.5 L541.9 656.5 L546.1 655.0 L550.3 663.5 L554.6 680.3 L558.8 677.2 L563.0 674.9 L567.2 672.0 L571.4 677.7 L575.7 676.4 L579.9 698.0 L584.1 694.7 L588.3 684.2 L592.5 685.8 L596.8 695.3 L601.0 668.4 L605.2 686.5 L609.4 695.7 L613.6 690.0 L617.8 687.8 L622.1 681.2 L626.3 687.7 L630.5 698.3 L634.7 685.8 L638.9 675.2 L643.2 676.6 L647.4 671.2 L651.6 650.3 L655.8 652.7 L660.0 666.8 L664.2 662.7 L668.5 665.0 L672.7 656.5 L676.9 638.8 L681.1 648.8 L685.3 638.4 L689.6 651.2 L693.8 631.4 L698.0 633.6 L702.2 644.9 L706.4 628.9 L710.7 626.4 L714.9 648.5 L719.1 603.1 L723.3 601.7 L727.5 609.2 L731.8 608.7 L736.0 608.4 L740.2 594.5 L744.4 607.5 L748.6 597.5 L752.8 591.2 L757.1 600.6 L761.3 597.8 L765.5 597.0 L769.7 596.2 L773.9 600.3 L778.2 594.5 L782.4 588.7 L786.6 597.8 L790.8 592.0 L795.0 592.8 L799.2 594.5 L803.5 589.5 L807.7 588.7 L811.9 593.7 L816.1 592.0 L820.3 596.7 L824.6 596.2 L828.8 594.5 L833.0 589.5 L837.2 591.2 L841.4 609.2 L845.7 595.9 L849.9 603.3 L854.1 604.2 L858.3 622.5 L862.5 607.8 L866.8 619.7 L871.0 609.5 L875.2 621.2 L879.4 618.9 L883.6 615.8 L887.8 615.8 L892.1 617.3 L896.3 611.9 L900.5 627.8 L904.7 643.7 L908.9 652.5 L913.2 649.5 L917.4 624.7 L921.6 627.3 L925.8 626.7 L930.0 636.2 L934.2 666.9 L938.5 679.8 L942.7 699.3 L946.9 702.0 L951.1 697.0 L955.3 686.0 L959.6 683.8 L963.8 674.7 L968.0 691.0 L972.2 695.3 L976.4 682.7 L980.7 688.7 L984.9 698.3 L989.1 698.3 L993.3 698.3 L997.5 689.5 L1001.8 688.2 L1006.0 694.4 L1010.2 700.7 L1014.4 702.0 L1018.6 693.0 L1022.8 697.0 L1027.1 700.7 L1031.3 702.0 L1035.5 702.0 L1039.7 698.3 L1043.9 700.7 L1048.2 702.0 L1052.4 699.3 L1056.6 700.7 L1060.8 702.0 L1065.0 700.7 L1069.2 702.0 L1073.5 698.3 L1077.7 690.9 L1081.9 687.0 L1086.1 690.7 L1090.3 693.0 L1094.6 680.2 L1098.8 679.2 L1103.0 686.2 L1107.2 689.2 L1111.4 691.3 L1115.7 689.3 L1119.9 670.7 L1124.1 659.8 L1128.3 652.8 L1132.5 644.7 L1136.8 654.1 L1141.0 661.0 L1145.2 666.5 L1149.4 656.5 L1153.6 655.0 L1157.8 663.5 L1162.1 680.3 L1166.3 677.2 L1170.5 674.9 L1174.7 672.0 L1178.9 677.7 L1183.2 676.4 L1187.4 698.0 L1191.6 694.7 L1195.8 684.2 L1200.0 685.8 L1204.2 695.3 L1208.5 668.4 L1212.7 686.5 L1216.9 695.7 L1221.1 690.0 L1225.3 687.8 L1229.6 681.2 L1233.8 687.7 L1238.0 698.3 L1242.2 685.8 L1246.4 675.2 L1250.7 676.6 L1254.9 671.2 L1259.1 650.3 L1263.3 652.7 L1267.5 666.8 L1271.8 662.7 L1276.0 665.0 L1280.2 656.5 L1284.4 638.8 L1288.6 648.8 L1292.8 638.4 L1297.1 651.2 L1301.3 631.4 L1305.5 633.6 L1309.7 644.9 L1313.9 628.9 L1318.2 626.4 L1322.4 648.5 L1326.6 603.1 L1330.8 601.7 L1335.0 609.2 L1339.2 608.7 L1343.5 608.4 L1347.7 594.5 L1351.9 607.5 L1356.1 597.5 L1360.3 591.2 L1364.6 600.6 L1368.8 597.8 L1368.8 702.0 L158.0 702.0 Z" fill="#223f56" stroke="#2f6078" stroke-width="1"/><path d="M158.0 597.0 L162.2 596.2 L166.4 600.3 L170.7 594.5 L174.9 588.7 L179.1 597.8 L183.3 592.0 L187.5 592.8 L191.8 594.5 L196.0 589.5 L200.2 588.7 L204.4 593.7 L208.6 592.0 L212.8 596.7 L217.1 596.2 L221.3 594.5 L225.5 589.5 L229.7 591.2 L233.9 609.2 L238.2 595.9 L242.4 603.3 L246.6 604.2 L250.8 622.5 L255.0 607.8 L259.2 619.7 L263.5 609.5 L267.7 621.2 L271.9 618.9 L276.1 615.8 L280.3 615.8 L284.6 617.3 L288.8 611.9 L293.0 627.8 L297.2 643.7 L301.4 652.5 L305.7 649.5 L309.9 624.7 L314.1 627.3 L318.3 626.7 L322.5 636.2 L326.8 666.9 L331.0 679.8 L335.2 699.3 L339.4 702.0 L343.6 697.0 L347.8 686.0 L352.1 683.8 L356.3 674.7 L360.5 691.0 L364.7 695.3 L368.9 682.7 L373.2 688.7 L377.4 698.3 L381.6 698.3 L385.8 698.3 L390.0 689.5 L394.2 688.2 L398.5 694.4 L402.7 700.7 L406.9 702.0 L411.1 693.0 L415.3 697.0 L419.6 700.7 L423.8 702.0 L428.0 702.0 L432.2 698.3 L436.4 700.7 L440.7 702.0 L444.9 699.3 L449.1 700.7 L453.3 702.0 L457.5 700.7 L461.8 702.0 L466.0 698.3 L470.2 690.9 L474.4 687.0 L478.6 690.7 L482.8 693.0 L487.1 680.2 L491.3 679.2 L495.5 686.2 L499.7 689.2 L503.9 691.3 L508.2 689.3 L512.4 670.7 L516.6 659.8 L520.8 652.8 L525.0 644.7 L529.2 654.1 L533.5 661.0 L537.7 666.5 L541.9 656.5 L546.1 655.0 L550.3 663.5 L554.6 680.3 L558.8 677.2 L563.0 674.9 L567.2 672.0 L571.4 677.7 L575.7 676.4 L579.9 698.0 L584.1 694.7 L588.3 684.2 L592.5 685.8 L596.8 695.3 L601.0 668.4 L605.2 686.5 L609.4 695.7 L613.6 690.0 L617.8 687.8 L622.1 681.2 L626.3 687.7 L630.5 698.3 L634.7 685.8 L638.9 675.2 L643.2 676.6 L647.4 671.2 L651.6 650.3 L655.8 652.7 L660.0 666.8 L664.2 662.7 L668.5 665.0 L672.7 656.5 L676.9 638.8 L681.1 648.8 L685.3 638.4 L689.6 651.2 L693.8 631.4 L698.0 633.6 L702.2 644.9 L706.4 628.9 L710.7 626.4 L714.9 648.5 L719.1 603.1 L723.3 601.7 L727.5 609.2 L731.8 608.7 L736.0 608.4 L740.2 594.5 L744.4 607.5 L748.6 597.5 L752.8 591.2 L757.1 600.6 L761.3 597.8 L765.5 597.0 L769.7 596.2 L773.9 600.3 L778.2 594.5 L782.4 588.7 L786.6 597.8 L790.8 592.0 L795.0 592.8 L799.2 594.5 L803.5 589.5 L807.7 588.7 L811.9 593.7 L816.1 592.0 L820.3 596.7 L824.6 596.2 L828.8 594.5 L833.0 589.5 L837.2 591.2 L841.4 609.2 L845.7 595.9 L849.9 603.3 L854.1 604.2 L858.3 622.5 L862.5 607.8 L866.8 619.7 L871.0 609.5 L875.2 621.2 L879.4 618.9 L883.6 615.8 L887.8 615.8 L892.1 617.3 L896.3 611.9 L900.5 627.8 L904.7 643.7 L908.9 652.5 L913.2 649.5 L917.4 624.7 L921.6 627.3 L925.8 626.7 L930.0 636.2 L934.2 666.9 L938.5 679.8 L942.7 699.3 L946.9 702.0 L951.1 697.0 L955.3 686.0 L959.6 683.8 L963.8 674.7 L968.0 691.0 L972.2 695.3 L976.4 682.7 L980.7 688.7 L984.9 698.3 L989.1 698.3 L993.3 698.3 L997.5 689.5 L1001.8 688.2 L1006.0 694.4 L1010.2 700.7 L1014.4 702.0 L1018.6 693.0 L1022.8 697.0 L1027.1 700.7 L1031.3 702.0 L1035.5 702.0 L1039.7 698.3 L1043.9 700.7 L1048.2 702.0 L1052.4 699.3 L1056.6 700.7 L1060.8 702.0 L1065.0 700.7 L1069.2 702.0 L1073.5 698.3 L1077.7 690.9 L1081.9 687.0 L1086.1 690.7 L1090.3 693.0 L1094.6 680.2 L1098.8 679.2 L1103.0 686.2 L1107.2 689.2 L1111.4 691.3 L1115.7 689.3 L1119.9 670.7 L1124.1 659.8 L1128.3 652.8 L1132.5 644.7 L1136.8 654.1 L1141.0 661.0 L1145.2 666.5 L1149.4 656.5 L1153.6 655.0 L1157.8 663.5 L1162.1 680.3 L1166.3 677.2 L1170.5 674.9 L1174.7 672.0 L1178.9 677.7 L1183.2 676.4 L1187.4 698.0 L1191.6 694.7 L1195.8 684.2 L1200.0 685.8 L1204.2 695.3 L1208.5 668.4 L1212.7 686.5 L1216.9 695.7 L1221.1 690.0 L1225.3 687.8 L1229.6 681.2 L1233.8 687.7 L1238.0 698.3 L1242.2 685.8 L1246.4 675.2 L1250.7 676.6 L1254.9 671.2 L1259.1 650.3 L1263.3 652.7 L1267.5 666.8 L1271.8 662.7 L1276.0 665.0 L1280.2 656.5 L1284.4 638.8 L1288.6 648.8 L1292.8 638.4 L1297.1 651.2 L1301.3 631.4 L1305.5 633.6 L1309.7 644.9 L1313.9 628.9 L1318.2 626.4 L1322.4 648.5 L1326.6 603.1 L1330.8 601.7 L1335.0 609.2 L1339.2 608.7 L1343.5 608.4 L1347.7 594.5 L1351.9 607.5 L1356.1 597.5 L1360.3 591.2 L1364.6 600.6 L1368.8 597.8" fill="none" stroke="#63e1f7" stroke-width="2.9" stroke-linejoin="round" stroke-linecap="round"/></g>
<rect x="158.0" y="582.5" width="1215.0" height="124.5" fill="none" stroke="#44557a" stroke-width="1"/>
<path d="M152.5 702.0h5.5" stroke="#d8dee9" stroke-width="1.3"/>
<text x="146.0" y="707.3" font-size="14.5" text-anchor="end">0.00</text>
<path d="M152.5 664.5h5.5" stroke="#d8dee9" stroke-width="1.3"/>
<text x="146.0" y="669.8" font-size="14.5" text-anchor="end">0.25</text>
<path d="M152.5 627.0h5.5" stroke="#d8dee9" stroke-width="1.3"/>
<text x="146.0" y="632.3" font-size="14.5" text-anchor="end">0.50</text>
<path d="M152.5 589.5h5.5" stroke="#d8dee9" stroke-width="1.3"/>
<text x="146.0" y="594.8" font-size="14.5" text-anchor="end">0.75</text>
<path d="M158.0 707.0v5.5" stroke="#d8dee9" stroke-width="1.3"/>
<text x="158.0" y="730.1" font-size="14.5" text-anchor="middle">00</text>
<path d="M309.9 707.0v5.5" stroke="#d8dee9" stroke-width="1.3"/>
<text x="309.9" y="730.1" font-size="14.5" text-anchor="middle">06</text>
<path d="M461.8 707.0v5.5" stroke="#d8dee9" stroke-width="1.3"/>
<text x="461.8" y="730.1" font-size="14.5" text-anchor="middle">12</text>
<path d="M613.6 707.0v5.5" stroke="#d8dee9" stroke-width="1.3"/>
<text x="613.6" y="730.1" font-size="14.5" text-anchor="middle">18</text>
<path d="M765.5 707.0v5.5" stroke="#d8dee9" stroke-width="1.3"/>
<text x="765.5" y="730.1" font-size="14.5" text-anchor="middle">00</text>
<path d="M917.4 707.0v5.5" stroke="#d8dee9" stroke-width="1.3"/>
<text x="917.4" y="730.1" font-size="14.5" text-anchor="middle">06</text>
<path d="M1069.2 707.0v5.5" stroke="#d8dee9" stroke-width="1.3"/>
<text x="1069.2" y="730.1" font-size="14.5" text-anchor="middle">12</text>
<path d="M1221.1 707.0v5.5" stroke="#d8dee9" stroke-width="1.3"/>
<text x="1221.1" y="730.1" font-size="14.5" text-anchor="middle">18</text>
<path d="M1373.0 707.0v5.5" stroke="#d8dee9" stroke-width="1.3"/>
<text x="1373.0" y="730.1" font-size="14.5" text-anchor="middle">00</text>
<text transform="translate(103,646.8) rotate(-90)" font-size="16.35" text-anchor="middle">Occupancy</text>
<text x="765.5" y="753.3" font-size="16.35" text-anchor="middle">Clock time (h)</text>
<rect x="158.0" y="788.5" width="1215.0" height="99.8" fill="#192334"/>
<path d="M158.0 851.3H1373.0" stroke="#453c3e" stroke-width="1"/>
<path d="M158.0 814.3H1373.0" stroke="#453c3e" stroke-width="1"/>
<rect x="170.0" y="869.2" width="111" height="19.1" fill="#f4a261"/>
<rect x="305.1" y="797.6" width="111" height="90.6" fill="#f4a261"/>
<rect x="440.2" y="810.4" width="111" height="77.9" fill="#f4a261"/>
<rect x="575.2" y="801.0" width="111" height="87.3" fill="#f4a261"/>
<rect x="710.3" y="825.0" width="111" height="63.3" fill="#f4a261"/>
<rect x="845.4" y="793.8" width="111" height="94.5" fill="#f4a261"/>
<rect x="980.5" y="810.0" width="111" height="78.3" fill="#f4a261"/>
<rect x="1115.6" y="864.6" width="111" height="23.7" fill="#f4a261"/>
<rect x="158.0" y="788.5" width="1215.0" height="99.8" fill="none" stroke="#44557a" stroke-width="1"/>
<path d="M152.5 888.3h5.5" stroke="#d8dee9" stroke-width="1.3"/>
<text x="146.0" y="893.6" font-size="14.5" text-anchor="end">0.0</text>
<path d="M152.5 851.3h5.5" stroke="#d8dee9" stroke-width="1.3"/>
<text x="146.0" y="856.6" font-size="14.5" text-anchor="end">0.2</text>
<path d="M152.5 814.3h5.5" stroke="#d8dee9" stroke-width="1.3"/>
<text x="146.0" y="819.6" font-size="14.5" text-anchor="end">0.4</text>
<path d="M225.5 888.3v5.5" stroke="#d8dee9" stroke-width="1.3"/>
<text x="225.5" y="911.3" font-size="14.5" text-anchor="middle">1</text>
<path d="M360.6 888.3v5.5" stroke="#d8dee9" stroke-width="1.3"/>
<text x="360.6" y="911.3" font-size="14.5" text-anchor="middle">2</text>
<path d="M495.7 888.3v5.5" stroke="#d8dee9" stroke-width="1.3"/>
<text x="495.7" y="911.3" font-size="14.5" text-anchor="middle">3</text>
<path d="M630.7 888.3v5.5" stroke="#d8dee9" stroke-width="1.3"/>
<text x="630.7" y="911.3" font-size="14.5" text-anchor="middle">4</text>
<path d="M765.8 888.3v5.5" stroke="#d8dee9" stroke-width="1.3"/>
<text x="765.8" y="911.3" font-size="14.5" text-anchor="middle">5</text>
<path d="M900.9 888.3v5.5" stroke="#d8dee9" stroke-width="1.3"/>
<text x="900.9" y="911.3" font-size="14.5" text-anchor="middle">6</text>
<path d="M1036.0 888.3v5.5" stroke="#d8dee9" stroke-width="1.3"/>
<text x="1036.0" y="911.3" font-size="14.5" text-anchor="middle">7</text>
<path d="M1171.1 888.3v5.5" stroke="#d8dee9" stroke-width="1.3"/>
<text x="1171.1" y="911.3" font-size="14.5" text-anchor="middle">8</text>
<path d="M1306.1 888.3v5.5" stroke="#d8dee9" stroke-width="1.3"/>
<text x="1306.1" y="911.3" font-size="14.5" text-anchor="middle">9</text>
<text transform="translate(112,840.4) rotate(-90)" font-size="16.35" text-anchor="middle">Occupancy</text>
<text x="765.5" y="933.5" font-size="16.35" text-anchor="middle">Day</text>
</svg>
</body></html>
